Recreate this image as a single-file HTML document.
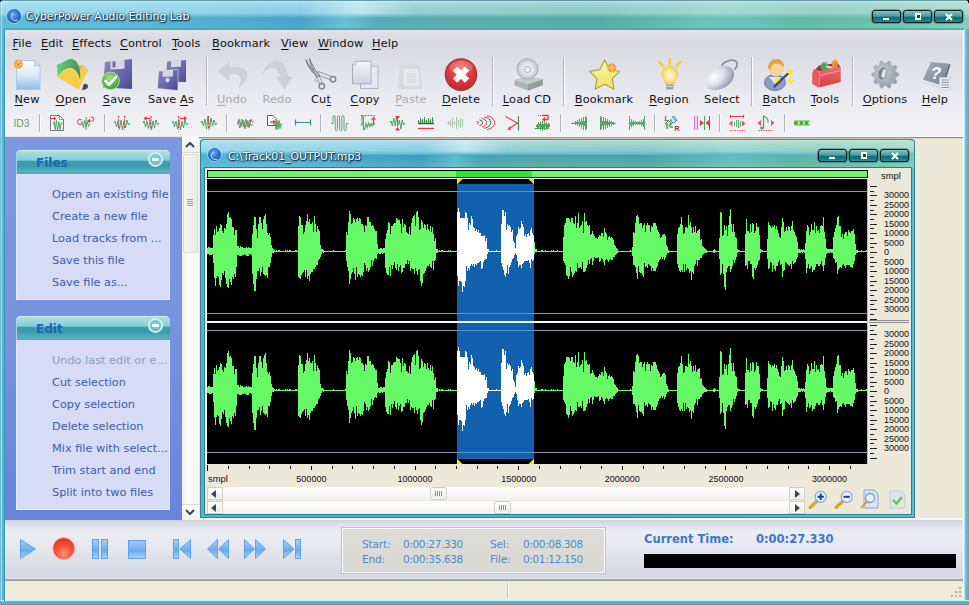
<!DOCTYPE html><html><head><meta charset="utf-8"><title>CyberPower Audio Editing Lab</title><style>
*{box-sizing:border-box}
html,body{margin:0;padding:0}
body{width:969px;height:605px;position:relative;overflow:hidden;background:#49b4cf;font-family:"DejaVu Sans","Liberation Sans",sans-serif;font-size:11.5px;color:#000}
.a{position:absolute}
.t{position:absolute;white-space:nowrap;line-height:1}
#frame{left:0;top:0;width:969px;height:605px;background:#4ab5d3}
.tup{position:absolute;-webkit-mask-image:linear-gradient(180deg,#000 0,#000 72%,transparent 100%);mask-image:linear-gradient(180deg,#000 0,#000 72%,transparent 100%);background:linear-gradient(180deg,rgba(255,255,255,.22) 0,rgba(255,255,255,0) 60%),linear-gradient(90deg,#98daec 0%,#94d6ea 20%,#8ccfe6 31%,#c0e6f0 37%,#94d0d4 43%,#8eccc8 62%,#a2d8d4 74.5%,#98d2c6 85%,#a8dccc 100%)}
.tlo{position:absolute;background:linear-gradient(180deg,rgba(0,0,0,.03) 0,rgba(255,255,255,.10) 100%),linear-gradient(90deg,#50b6d6 0%,#52b8d6 10%,#3f9ec6 31%,#5cbcd0 35.6%,#4aa6b6 39%,#4ea8a4 46.5%,#48a8a0 62%,#62c2ba 74.5%,#58b6a4 82.5%,#60bea6 91%,#78ccb8 100%)}
#client{left:5px;top:30px;width:958px;height:570px;background:#ece9d8}
#tb{left:5px;top:30px;width:958px;height:106px;background:linear-gradient(180deg,#e6e7ee 0,#dddee6 3px,#d7d9e1 14px,#dadce3 24px,#e3e4ea 45px,#eaebf0 70px,#f0f0f4 90px,#f2f2f6 106px)}
.menu span{position:absolute;top:36.5px;white-space:nowrap;line-height:14px;font-size:11.3px;letter-spacing:.12px;color:#111}
u{text-decoration:underline;text-underline-offset:1.5px;text-decoration-thickness:1px}
.lbl{position:absolute;top:93.3px;white-space:nowrap;line-height:14px;font-size:11.3px;letter-spacing:.15px;color:#111}
.dis{color:#a9a9a9}
.vsep{position:absolute;width:1px;background:#b4b4bc;box-shadow:1px 0 0 #fafafc}
#side{left:5px;top:137px;width:177px;height:383px;background:linear-gradient(180deg,#7d98e1 0,#7792df 50%,#6685da 100%)}
.ph{position:absolute;left:11px;width:154px;height:24px;border-radius:5px 5px 0 0;background:linear-gradient(180deg,#b4e0e6 0,#a2d8e0 4px,#86ccd6 10px,#3c9eb0 11.5px,#3a9cae 16px,#58b2c0 22px,#4ca8b8 24px);box-shadow:inset 0 1px 0 #d7f0f3, inset 1px 0 0 #9fd4dc}
.ph b{position:absolute;left:20px;top:5.5px;font-size:12px;color:#1f64b8;line-height:14px}
.pb{position:absolute;left:11px;width:154px;background:#d6dbf7;border:1px solid #e9ecfb;border-top:none}
.pb span{position:absolute;left:35px;white-space:nowrap;color:#3b5fa6;font-size:11.3px;line-height:14px}
.pb span.d{color:#8f9cc0}
.minus{position:absolute;right:7.3px;top:2.3px;width:14.6px;height:14.6px;border-radius:50%;border:2px solid #c9eef2;background:radial-gradient(circle at 50% 40%,#8ed0d8,#5fb5c2)}
.minus i{position:absolute;left:1.8px;top:4.2px;width:7px;height:2.4px;background:#eafcff;border-radius:1px}

.wb{position:absolute;height:13px;border:1px solid #031a1e;border-radius:3px;background:linear-gradient(180deg,#9ccccc 0,#74b4b6 1.5px,#4c9ea2 5px,#0f6e78 6.5px,#147a82 9px,#2a9298 11px);box-shadow:0 0 0 .6px rgba(20,60,70,.6)}
#cw{left:200px;top:139px;width:715px;height:379px;border-radius:4px 4px 0 0;background:linear-gradient(90deg,#4ab6d3 0,#4cb6d0 60%,#5cbacc 100%);box-shadow:inset 0 0 0 1px #2f8496}
.ttxt{position:absolute;white-space:nowrap;color:#fff;font-size:10.85px;line-height:14px;text-shadow:1px 1px 1px #14304f,0 0 2px #1a3a5a,0 1px 2px #1a3a5a}
.orb{position:absolute;border-radius:50%;background:radial-gradient(circle at 45% 40%,#6fb0f0 0,#2f74cc 45%,#15489a 100%);box-shadow:0 0 0 1px rgba(190,225,245,.6)}
.orb:after{content:"";position:absolute;left:25%;top:22%;width:50%;height:50%;border-radius:50%;border:1.6px solid rgba(225,240,255,.85);border-right-color:transparent;border-top-color:transparent;transform:rotate(10deg)}
.sc{position:absolute;white-space:nowrap;font-family:"Liberation Sans",sans-serif;font-size:9px;line-height:10px;color:#111}
.sbtn{position:absolute;background:linear-gradient(180deg,#fff,#ecebe4);border:1px solid #f8f8f4;box-shadow:0 0 0 1px #d2d0c4}
#bp{left:5px;top:520px;width:958px;height:61px;background:linear-gradient(180deg,#cfd2df 0,#dcdee8 4px,#ecedf3 12px,#e9eaf1 22px,#dfe1ea 38px,#d6d8e5 54px,#d9dbe6 59px,#85878d 60px,#a8a8a8 61px)}
#sb{left:5px;top:581px;width:958px;height:19px;background:#eeebda}
.inf{position:absolute;white-space:nowrap;font-size:10.5px;line-height:13px;color:#4b8ad0}
</style></head><body><div id="frame" class="a"></div><div class="tlo" style="left:0;top:0;width:969px;height:30px"></div><div class="tup" style="left:0;top:0;width:969px;height:18px"></div><div class="a" style="left:0;top:0;width:969px;height:1px;background:#5f9aa6"></div><div class="a" style="left:0;top:1px;width:969px;height:1px;background:rgba(255,255,255,.35)"></div><div class="a" style="left:0;top:29px;width:5px;height:576px;background:linear-gradient(90deg,#4aa4c4 0,#a4e0f0 1.2px,#86d4ea 2px,#4cb6d6 2.6px,#49b3d3 4.3px,#3f98ac 4.3px,#3f98ac 5px)"></div><div class="a" style="left:0;top:1px;width:3px;height:28px;background:linear-gradient(90deg,rgba(60,130,160,.55) 0,rgba(255,255,255,.5) 1.2px,rgba(255,255,255,.2) 2px,rgba(255,255,255,0) 3px)"></div><div class="a" style="left:963px;top:29px;width:6px;height:576px;background:linear-gradient(90deg,#fff 0,#fff 1.2px,#94dae6 1.6px,#5cc0d4 3px,#48b4cc 6px)"></div><div class="a" style="left:4px;top:28px;width:960px;height:2px;background:linear-gradient(180deg,rgba(50,150,150,.35),#48a4a6)"></div><div class="a" style="left:0;top:600px;width:969px;height:5px;background:linear-gradient(180deg,#d8f2f6 0,#c0ecf2 1px,#58bcd6 1.4px,#4ab2d0 3px,#3ea4c6 5px)"></div><div class="a" style="left:4px;top:600px;width:1px;height:1px;background:#378c9e"></div><div class="orb" style="left:7px;top:9px;width:14px;height:14px"></div><div class="ttxt" style="left:26px;top:10px">CyberPower Audio Editing Lab</div><div class="wb" style="left:872px;top:10px;width:29px"><i style="position:absolute;left:10px;top:7px;width:6px;height:2px;background:#fff"></i></div><div class="wb" style="left:903px;top:10px;width:29px"><i style="position:absolute;left:11px;top:2px;width:6px;height:7px;background:#fff"></i><i style="position:absolute;left:12.5px;top:4px;width:3px;height:2.5px;background:#0c4a52"></i></div><div class="wb" style="left:934px;top:10px;width:29px"><svg style="position:absolute;left:10px;top:2px" width="8" height="8" viewBox="0 0 8 8"><path d="M1 1L7 7M7 1L1 7" stroke="#fff" stroke-width="2"/></svg></div><div class="a" style="left:0;top:0;width:2px;height:1px;background:#1c3038"></div><div class="a" style="left:0;top:0;width:1px;height:2px;background:#1c3038"></div><div class="a" style="left:967px;top:0;width:2px;height:1px;background:#111"></div><div class="a" style="left:968px;top:0;width:1px;height:3px;background:#111"></div><div id="client" class="a"></div><div id="tb" class="a"></div><div class="menu"><span style="left:12.5px"><u>F</u>ile</span><span style="left:41px"><u>E</u>dit</span><span style="left:72px"><u>E</u>ffects</span><span style="left:120px"><u>C</u>ontrol</span><span style="left:172px"><u>T</u>ools</span><span style="left:212px"><u>B</u>ookmark</span><span style="left:281px"><u>V</u>iew</span><span style="left:318px"><u>W</u>indow</span><span style="left:372px"><u>H</u>elp</span></div><span class="lbl" style="left:-23px;width:100px;text-align:center"><u>N</u>ew</span><span class="lbl" style="left:21px;width:100px;text-align:center"><u>O</u>pen</span><span class="lbl" style="left:67px;width:100px;text-align:center"><u>S</u>ave</span><span class="lbl" style="left:121px;width:100px;text-align:center">Save <u>A</u>s</span><span class="lbl dis" style="left:182px;width:100px;text-align:center"><u>U</u>ndo</span><span class="lbl dis" style="left:227px;width:100px;text-align:center">Redo</span><span class="lbl" style="left:271px;width:100px;text-align:center">Cu<u>t</u></span><span class="lbl" style="left:315px;width:100px;text-align:center"><u>C</u>opy</span><span class="lbl dis" style="left:361px;width:100px;text-align:center"><u>P</u>aste</span><span class="lbl" style="left:411px;width:100px;text-align:center"><u>D</u>elete</span><span class="lbl" style="left:477px;width:100px;text-align:center"><u>L</u>oad CD</span><span class="lbl" style="left:554px;width:100px;text-align:center"><u>B</u>ookmark</span><span class="lbl" style="left:619px;width:100px;text-align:center"><u>R</u>egion</span><span class="lbl" style="left:672px;width:100px;text-align:center">Select</span><span class="lbl" style="left:729px;width:100px;text-align:center"><u>B</u>atch</span><span class="lbl" style="left:775px;width:100px;text-align:center"><u>T</u>ools</span><span class="lbl" style="left:835px;width:100px;text-align:center"><u>O</u>ptions</span><span class="lbl" style="left:885px;width:100px;text-align:center"><u>H</u>elp</span><div class="vsep" style="left:206px;top:57px;height:49px"></div><div class="vsep" style="left:492px;top:57px;height:49px"></div><div class="vsep" style="left:563px;top:57px;height:49px"></div><div class="vsep" style="left:751px;top:57px;height:49px"></div><div class="vsep" style="left:852px;top:57px;height:49px"></div><div class="vsep" style="left:39px;top:114px;height:18px"></div><div class="vsep" style="left:104px;top:114px;height:18px"></div><div class="vsep" style="left:226px;top:114px;height:18px"></div><div class="vsep" style="left:320px;top:114px;height:18px"></div><div class="vsep" style="left:560px;top:114px;height:18px"></div><div class="vsep" style="left:654px;top:114px;height:18px"></div><div class="vsep" style="left:719px;top:114px;height:18px"></div><div class="vsep" style="left:784px;top:114px;height:18px"></div><svg class="a" style="left:0;top:55px" width="969" height="40" viewBox="0 55 969 40"><defs>
<linearGradient id="gnew" x1="0" y1="0" x2="0" y2="1"><stop offset="0" stop-color="#fbfdff"/><stop offset=".5" stop-color="#dcecfa"/><stop offset="1" stop-color="#8cbdec"/></linearGradient>
<linearGradient id="gfl" x1="0" y1="0" x2="1" y2="1"><stop offset="0" stop-color="#8a8ac4"/><stop offset=".5" stop-color="#6a6ab0"/><stop offset="1" stop-color="#4c4c94"/></linearGradient>
<radialGradient id="ggr" cx=".45" cy=".35" r=".7"><stop offset="0" stop-color="#a8e090"/><stop offset=".6" stop-color="#5cb848"/><stop offset="1" stop-color="#3c9030"/></radialGradient>
<radialGradient id="gred" cx=".5" cy=".3" r=".8"><stop offset="0" stop-color="#f07070"/><stop offset=".5" stop-color="#e03838"/><stop offset="1" stop-color="#b82020"/></radialGradient>
<linearGradient id="gcp" x1="0" y1="0" x2="0" y2="1"><stop offset="0" stop-color="#f4f4fa"/><stop offset="1" stop-color="#cfd2e2"/></linearGradient>
<radialGradient id="gcd" cx=".5" cy=".5" r=".5"><stop offset="0" stop-color="#f8f8fa"/><stop offset=".6" stop-color="#dfe3e8"/><stop offset="1" stop-color="#b8c0c8"/></radialGradient>
<linearGradient id="gstar" x1="0" y1="0" x2="0" y2="1"><stop offset="0" stop-color="#fbf6a8"/><stop offset="1" stop-color="#f0e060"/></linearGradient>
<radialGradient id="gbulb" cx=".5" cy=".5" r=".5"><stop offset="0" stop-color="#fff8f0"/><stop offset=".55" stop-color="#fbe898"/><stop offset="1" stop-color="#f2cc48"/></radialGradient>
<radialGradient id="gmouse" cx=".35" cy=".3" r=".8"><stop offset="0" stop-color="#ffffff"/><stop offset=".45" stop-color="#dcdeea"/><stop offset=".8" stop-color="#a4a9c6"/><stop offset="1" stop-color="#8088ac"/></radialGradient>
<linearGradient id="gtool" x1="0" y1="0" x2="0" y2="1"><stop offset="0" stop-color="#f07078"/><stop offset="1" stop-color="#d83840"/></linearGradient>
<radialGradient id="ggear" cx=".4" cy=".4" r=".7"><stop offset="0" stop-color="#c4ccd6"/><stop offset="1" stop-color="#8c96a4"/></radialGradient>
<linearGradient id="gbook" x1="0" y1="0" x2="1" y2="1"><stop offset="0" stop-color="#a4b0c0"/><stop offset="1" stop-color="#74808e"/></linearGradient>
<linearGradient id="gleaf" x1="0" y1="0" x2="1" y2="0"><stop offset="0" stop-color="#5cd674"/><stop offset=".4" stop-color="#58b868"/><stop offset="1" stop-color="#4c8c5c"/></linearGradient>
</defs><path d="M16.5 60.5h18l5.5 5.5v23.5h-23.5z" fill="url(#gnew)" stroke="#a8c8ea" stroke-width="1"/><path d="M34.5 60.5v5.5h5.5z" fill="#c8dcf2" stroke="#a8c8ea" stroke-width=".8"/><circle cx="18.4" cy="64.3" r="4.6" fill="#f8a838"/><path d="M18.4 61v6.6M15.1 64.3h6.6" stroke="#fbd890" stroke-width="1.2"/><circle cx="18.4" cy="64.3" r="1.4" fill="#f08818"/><path d="M83.500 84.500c2-1.500 4.500-.5 4.500 2 0 2-3 3.500-6 3.500z" fill="#4a4a48"/><path d="M58.600 63.600l6 .6 3 1.400 15.400-.6 5 5.200-9.500 19.200-20.900-12.600z" fill="#eebc34"/><path d="M82 66l6 4.200-9.500 19.200-2-9z" fill="#f6d050"/><path d="M57 64.500c5-.5 10-6 15-5.500 6 1 9.500 11 8 22-1.500-8-5-13-10-13-5 0-9 5-12.400 9z" fill="url(#gleaf)"/><path d="M57.600 77c4-4.500 8-8.500 12.400-8.500 5 0 8.500 6 10 14l-1.500 7z" fill="#f6cf48"/><path d="M57.600 77c4-4.500 8-8.500 12.400-8.500 5 0 8.500 6 10 14" stroke="#fae48c" stroke-width=".8" fill="none"/><path d="M105 62l27-3v30l-29-1.500z" fill="url(#gfl)"/><path d="M110.500 60.500l14-1.200v9.500l-14 .8z" fill="#d4d6e2"/><path d="M112.500 61.500l3-.3v6l-3 .2z" fill="#6a6aa8"/><circle cx="110.500" cy="80.800" r="8.800" fill="url(#ggr)" stroke="#b8e0a8" stroke-width="1"/><path d="M105.500 81l3.500 3.800 7-8" stroke="#fff" stroke-width="2.600" fill="none" stroke-linecap="round" stroke-linejoin="round"/><path d="M167 61.500l19-1.500v22l-20-.5z" fill="url(#gfl)"/><path d="M171 60.800l10-.6v6.500l-10 .5z" fill="#d4d6e2"/><path d="M158.500 71l19.500-1.500v21l-20.500-2z" fill="url(#gfl)" stroke="#e8e8f2" stroke-width=".6"/><path d="M162.500 70.500l10.500-.8v6.800l-10.500 .6z" fill="#d4d6e2"/><circle cx="167.500" cy="80" r="2.200" fill="#d8dcec"/><path d="M218 71l11.500-9.500v5.500c9-.5 17 .5 18 6.500 .5 6-5 11-10.500 16 3-5 5-10 3-13-2-2.500-6-2.500-10.500-2v6.500z" fill="#cdd0d6"/><path d="M261 76c3-8 9-15 16-15.500 7 1 10 8 11 16h4.500l-8 13.500-8.500-13h4.500c-1-5-3-9-7-9.500-5 0-9 4-12.500 8.500z" fill="#cdd0d6"/><path d="M319 73.500l11.500 4.500" stroke="#8c8c90" stroke-width="4.200" stroke-linecap="round"/><path d="M319 73.500l11.500 4.500" stroke="#e6e6ea" stroke-width="2.600" stroke-linecap="round"/><path d="M317.500 76l3.500 7.500" stroke="#8c8c90" stroke-width="3.800" stroke-linecap="round"/><path d="M317.500 76l3.500 7.500" stroke="#e6e6ea" stroke-width="2.200" stroke-linecap="round"/><path d="M306 59.500c2.500 6.500 7 11.500 13.500 15.500l-2 1.500c-6-4.500-10-10-11.500-17z" fill="#bcbcc0" stroke="#707074" stroke-width=".9"/><path d="M309.500 58.500c1 7 3.500 12.500 8 18.500l2.200-1.500c-4.500-5-7.500-10.500-10.200-17z" fill="#c8c8cc" stroke="#707074" stroke-width=".9"/><circle cx="333" cy="79.300" r="2.700" fill="#e4e4e8" stroke="#88888c" stroke-width="1.500"/><circle cx="321.800" cy="86.300" r="2.700" fill="#e4e4e8" stroke="#88888c" stroke-width="1.500"/><circle cx="316.500" cy="80" r="1.600" fill="#ececee" stroke="#a4a4a8" stroke-width=".9"/><path d="M360.500 66h17.500v22.500h-17.500z" fill="#e6e8f2" stroke="#b0b4c6"/><path d="M356 61.200h15v22.600h-18.500v-19z" fill="url(#gcp)" stroke="#a8acc0"/><path d="M352.500 64.800h3.500v-3.600z" fill="#fff" stroke="#a8acc0" stroke-width=".7"/><path d="M400 65h20l2.500 24h-25z" fill="#d9dade"/><path d="M406 59.500h9v6h-9z" fill="#dcdde1"/><path d="M404 69h14l1.500 17h-16z" fill="#e8e9ec"/><path d="M407 73h9v10h-9z" fill="#dfe0e4"/><circle cx="461" cy="74.600" r="15.600" fill="url(#gred)" stroke="#a83440" stroke-width="1.400"/><ellipse cx="461" cy="67.500" rx="11.500" ry="6.500" fill="#fff" opacity=".16"/><path d="M455 68.600l12 12M467 68.600l-12 12" stroke="#fff" stroke-width="6" stroke-linecap="butt"/><path d="M514.500 80l14-3.500 14.500 3v5.500l-15 5.500-13.500-5z" fill="#a8b4b0"/><path d="M514.500 80l14-3.500 14.500 3-15 5z" fill="#c4ccc8"/><path d="M528 84.500l15-5v5.500l-15 5.500z" fill="#90a098"/><ellipse cx="527.500" cy="69" rx="10.500" ry="10.300" fill="url(#gcd)" stroke="#a8b0b8" stroke-width="1"/><circle cx="527.500" cy="69.500" r="3" fill="#f4f6f8" stroke="#a0a8b0" stroke-width="1"/><circle cx="527.500" cy="69.500" r="1.200" fill="#e8ecf0"/><path d="M604.600 60l4.800 9.600 10.400 1.700-7.600 7.300 1.900 10.600-9.500-5-9.500 5 1.900-10.600-7.600-7.300 10.400-1.700z" fill="url(#gstar)" stroke="#a8a458" stroke-width="1.200" stroke-linejoin="round"/><circle cx="611.800" cy="67.900" r="4.400" fill="#f89838"/><path d="M611.800 64.500v6.800M608.400 67.900h6.800" stroke="#fbd088" stroke-width="1.100"/><path d="M659 62l4 4M669.800 59v5M680.500 62l-4 4" stroke="#f4cc50" stroke-width="2.600" stroke-linecap="round"/><path d="M669.800 66c5 0 8.500 3.800 8.500 8.200 0 4-3 6-4 10h-9c-1-4-4-6-4-10 0-4.400 3.500-8.200 8.500-8.200z" fill="url(#gbulb)"/><rect x="666" y="84.500" width="7.500" height="5" fill="#9aa0a8"/><rect x="666" y="86" width="7.500" height="1" fill="#d0d4d8"/><path d="M722 65c2-3.500 8-5.500 12.500-4.500 3.500 1 3.500 5.500 .5 8.500" stroke="#8c92a6" stroke-width="1.800" fill="none" stroke-linecap="round"/><ellipse cx="719.800" cy="78.200" rx="15.500" ry="10.500" transform="rotate(-32 719.800 78.200)" fill="url(#gmouse)"/><ellipse cx="775" cy="82.500" rx="10.500" ry="8" fill="#8c9cc4" stroke="#6878a8" stroke-width="1"/><path d="M769 77l6 7 6-7z" fill="#e8ecf6"/><circle cx="776" cy="68.500" r="7.800" fill="#f4d498"/><path d="M768 68c0-6 4-9.500 9-9 5 .5 7.500 4 7 8-3-3-7-4-10-3-2 1-3 3-3 6z" fill="#dca848"/><path d="M774.500 86.500l13.500-13" stroke="#404858" stroke-width="2.400" stroke-linecap="round"/><path d="M790 67.4l1.38 3.2199999999999998 3.2199999999999998 1.38-3.2199999999999998 1.38-1.38 3.2199999999999998-1.38-3.2199999999999998-3.2199999999999998-1.38 3.2199999999999998-1.38z" fill="#f4e830"/><path d="M790.6 76.39999999999999l1.32 3.08 3.08 1.32-3.08 1.32-1.32 3.08-1.32-3.08-3.08-1.32 3.08-1.32z" fill="#f4e830"/><path d="M777 76.4l1.08 2.52 2.52 1.08-2.52 1.08-1.08 2.52-1.08-2.52-2.52-1.08 2.52-1.08z" fill="#f4e830"/><path d="M815 70l4-4.500 18.500-2.500 3 4-20 4.500z" fill="#a83038"/><path d="M821 70c-1-4 0-7.500 3-8 3-.5 4 1.500 3.500 3.500l3 3.500-4 2.500z" fill="#48a858"/><path d="M823.500 63.500c1.500-1 3-.5 3.500 1" stroke="#90d898" stroke-width="1" fill="none"/><path d="M826.500 66.500l7 1.500" stroke="#ece4cc" stroke-width="2.200"/><path d="M832.500 71c-1-4-1-9 1-11 2-1.500 4.500 0 4.500 3l-1 8z" fill="#e89030"/><path d="M834 61.500c.8-1 2-1 2.600 0" stroke="#f8c880" stroke-width="1" fill="none"/><path d="M812.500 73.500c0-2.500 1-4 2.500-4.500l4 2.500 21.700-5v15.500l-21.700 5.500-6.500-3.500z" fill="url(#gtool)"/><path d="M819 71.500v16" stroke="#f8a8ac" stroke-width="1"/><path d="M812.500 74c0-2 1-3.500 2.500-4.500l4 2.500v15.500l-6.500-3.500z" fill="#e85860"/><path d="M819.500 75.500l21-5" stroke="#f4989c" stroke-width="1.200" fill="none"/><path d="M898.8 73.5L898.8 75.7L895.7 77.2L895.2 78.8L896.9 81.9L895.6 83.7L892.2 83.0L890.9 84.0L890.5 87.5L888.5 88.2L886.2 85.6L884.5 85.6L882.1 88.2L880.1 87.5L879.7 84.0L878.4 83.0L875.0 83.7L873.7 81.9L875.4 78.8L874.9 77.2L871.8 75.7L871.8 73.5L874.9 72.0L875.4 70.4L873.7 67.3L875.0 65.5L878.4 66.2L879.7 65.2L880.1 61.7L882.1 61.0L884.4 63.6L886.1 63.6L888.5 61.0L890.5 61.7L890.9 65.2L892.2 66.2L895.6 65.5L896.9 67.3L895.2 70.4L895.7 72.0z" fill="url(#ggear)" stroke="#a4acb8" stroke-width=".8" stroke-linejoin="round"/><ellipse cx="882.500" cy="73.500" rx="4.200" ry="6" transform="rotate(15 882.500 73.500)" fill="#7c8694"/><ellipse cx="883.800" cy="73.500" rx="2" ry="4.500" transform="rotate(15 883.800 73.500)" fill="#dfe3ea"/><path d="M931 62l18 1.800-7.500 24.200-19.500-6.200z" fill="url(#gbook)"/><path d="M922 81.800l19.500 6.200.8-2.500-19.500-6z" fill="#e4e8ee"/><path d="M949 63.800l1.500 1-7.500 23.500-1.500-.3z" fill="#5c6876"/><text x="929.500" y="79.500" font-family="Liberation Sans, sans-serif" font-weight="bold" font-size="17" fill="#fff" transform="skewX(-12)" style="transform-origin:929px 79px">?</text><path d="M939.500 77.500h11v12.500h-11z" fill="#e8ebf0" stroke="#c4cad2" stroke-width=".6"/><path d="M941.500 80h7.500M941.500 82.500h7.500M941.500 85h7.500M941.500 87.500h7.500" stroke="#8c96a4" stroke-width="1"/></svg><svg class="a" style="left:0;top:111px" width="969" height="25" viewBox="0 111 969 25"><text x="13.500" y="127" font-family="Liberation Sans, sans-serif" font-size="10.500" fill="#5aa078" textLength="16" lengthAdjust="spacingAndGlyphs">ID3</text><path d="M50.500 115.500h9l4 4v11h-13z" fill="#fdfdfd" stroke="#707880" stroke-width="1"/><path d="M59.500 115.500v4h4" fill="none" stroke="#707880" stroke-width=".8"/><path d="M53 124.5L54.0 121.5L55.2 129.5L56.4 120.5L57.6 130.5L58.8 121.5L60.0 129.5L61.2 122.5L62.4 124.5" stroke="#4aa860" stroke-width="1.0" fill="none" stroke-linejoin="round"/><path d="M50 118.500h5" stroke="#e83848" stroke-width="1.300"/><path d="M54 116.500l2.500 2-2.500 2z" fill="#e83848"/><path d="M86 117v13" stroke="#4aa860" stroke-width="1"/><path d="M81 123.5L82.0 121.5L83.3 127.5L84.6 120.5L85.9 127.5L87.2 121.5L88.5 126.5L89.8 123.5" stroke="#4aa860" stroke-width="1.0" fill="none" stroke-linejoin="round"/><path d="M81.500 120a2.500 2.500 0 1 0 0 4" stroke="#e8506a" stroke-width="1.100" fill="none"/><path d="M88 121h4a2 2 0 1 0-1.500-3.500" stroke="#e8506a" stroke-width="1.200" fill="none"/><path d="M87 121l3-2.200v4.400z" fill="#e83848"/><path d="M114 123L115.0 121.0L116.5 127.0L118.0 121.0L119.5 129.0L121.0 120.0L122.5 130.0L124.0 121.0L125.5 128.0L127.0 120.0L128.5 125.0L130.0 123" stroke="#4aa860" stroke-width="1.0" fill="none" stroke-linejoin="round"/><path d="M118.5 116V130" stroke="#e83848" stroke-width="1.2" stroke-dasharray="2 1.3" fill="none"/><path d="M124.5 116V130" stroke="#e83848" stroke-width="1.2" stroke-dasharray="2 1.3" fill="none"/><path d="M143 123L144.0 121.0L145.5 127.0L147.0 121.0L148.5 129.0L150.0 120.0L151.5 130.0L153.0 121.0L154.5 128.0L156.0 120.0L157.5 125.0L159.0 123" stroke="#4aa860" stroke-width="1.0" fill="none" stroke-linejoin="round"/><path d="M151 116V130" stroke="#e83848" stroke-width="1.2" stroke-dasharray="2 1.3" fill="none"/><path d="M144.500 118.500h6" stroke="#e83848" stroke-width="1.400"/><path d="M143.500 118.500l3-2.500v5z" fill="#e83848"/><path d="M172 123L173.0 121.0L174.5 127.0L176.0 121.0L177.5 129.0L179.0 120.0L180.5 130.0L182.0 121.0L183.5 128.0L185.0 120.0L186.5 125.0L188.0 123" stroke="#4aa860" stroke-width="1.0" fill="none" stroke-linejoin="round"/><path d="M178.5 116V130" stroke="#e83848" stroke-width="1.2" stroke-dasharray="2 1.3" fill="none"/><path d="M179.500 118.500h5" stroke="#e83848" stroke-width="1.400"/><path d="M187 118.500l-3-2.500v5z" fill="#e83848"/><path d="M201 123L202.0 121.0L203.5 126.0L205.0 119.0L206.5 129.0L208.0 116.0L209.5 129.0L211.0 118.0L212.5 126.0L214.0 120.0L215.5 125.0L217.0 123" stroke="#4aa860" stroke-width="1.0" fill="none" stroke-linejoin="round"/><path d="M208.5 116V130" stroke="#e83848" stroke-width="1.2" stroke-dasharray="2 1.3" fill="none"/><path d="M238 122.5L239.0 119.5L241.0 126.5L243.0 120.5L245.0 128.5L247.0 120.5L249.0 127.5L251.0 119.5L253.0 122.5" stroke="#e05868" stroke-width="1.2" fill="none" stroke-linejoin="round"/><path d="M237 124L238.0 122.0L239.9 128.0L241.8 119.0L243.7 127.0L245.6 119.0L247.5 127.0L249.4 120.0L251.3 126.0L253.2 124" stroke="#4aa860" stroke-width="1.0" fill="none" stroke-linejoin="round"/><path d="M267.500 115.500h5.500l3 3v7h-8.500z" fill="#fff" stroke="#a03840" stroke-width="1"/><path d="M270 122h4" stroke="#e83848" stroke-width="1.300"/><path d="M276 122l-3-2.300v4.600z" fill="#e83848"/><path d="M274 125.5L275.0 123.5L276.0 129.5L277.0 120.5L278.0 129.5L279.0 120.5L280.0 128.5L281.0 123.5L282.0 125.5" stroke="#4aa860" stroke-width="1.0" fill="none" stroke-linejoin="round"/><path d="M295.500 119.500v6M310.500 119.500v6M295.500 122.500h15" stroke="#3a9088" stroke-width="1.200" fill="none"/><path d="M331 123.500h2v-6.500c0-1.800 2.200-1.800 2.200 0v12.500c0 1.800 2.200 1.800 2.200 0v-12.500c0-1.800 2.200-1.800 2.200 0v12.500c0 1.800 2.200 1.800 2.200 0v-12.500c0-1.800 2.200-1.800 2.200 0v12.500c0 1.800 2.200 1.800 2.200 0v-6h2.300" stroke="#5aa872" stroke-width="1" fill="none"/><path d="M361 115.500h14" stroke="#e83848" stroke-width="1.200" stroke-dasharray="2 1.200"/><path d="M360.500 125h1.500v-8.500h1.500v13h1.200l1.300-6 1.300 4 1.300-4.500 1.200 3.500 1.300-3 1.200 2.500 1.200-2.500 1.500 1" stroke="#4aa860" stroke-width="1.100" fill="none"/><path d="M373.500 119.500v5" stroke="#e83848" stroke-width="1.400"/><path d="M373.500 116.500l2.500 3.200h-5z" fill="#e83848"/><path d="M390 123L391.0 121.0L392.4 126.0L393.8 118.0L395.2 126.0L396.6 117.0L398.0 125.0L399.4 120.0L400.8 129.0L402.2 120.0L403.6 125.0L405.0 123" stroke="#4aa860" stroke-width="1.0" fill="none" stroke-linejoin="round"/><path d="M395 116h5l-2.500 3.500zM395 130.500h5l-2.500-3.500z" fill="#e83848"/><path d="M397.500 119v8" stroke="#e83848" stroke-width="1"/><path d="M418 123.500h16" stroke="#2f6038" stroke-width="1.400"/><g shape-rendering="crispEdges"><path d="M418.5 123V120" stroke="#4a9458" stroke-width="1"/><path d="M420.5 123V118" stroke="#4a9458" stroke-width="1"/><path d="M422.5 123V119" stroke="#4a9458" stroke-width="1"/><path d="M424.5 123V117" stroke="#4a9458" stroke-width="1"/><path d="M426.5 123V120" stroke="#4a9458" stroke-width="1"/><path d="M428.5 123V118" stroke="#4a9458" stroke-width="1"/><path d="M430.5 123V119" stroke="#4a9458" stroke-width="1"/><path d="M432.5 123V117" stroke="#4a9458" stroke-width="1"/><path d="M419.5 123V121" stroke="#9cc8a4" stroke-width="1"/><path d="M421.5 123V120" stroke="#9cc8a4" stroke-width="1"/><path d="M423.5 123V121" stroke="#9cc8a4" stroke-width="1"/><path d="M425.5 123V120" stroke="#9cc8a4" stroke-width="1"/><path d="M427.5 123V121" stroke="#9cc8a4" stroke-width="1"/><path d="M429.5 123V120" stroke="#9cc8a4" stroke-width="1"/><path d="M431.5 123V121" stroke="#9cc8a4" stroke-width="1"/><path d="M433.5 123V120" stroke="#9cc8a4" stroke-width="1"/></g><path d="M418 128.500h16" stroke="#e83848" stroke-width="1.300"/><g shape-rendering="crispEdges"><path d="M448.0 121V125M450.0 120V126M452.0 118V128M454.0 121V125M456.0 117V129M458.0 120V126M460.0 118V128M462.0 119V127" stroke="#a8c6a8" stroke-width="1" fill="none" shape-rendering="crispEdges"/></g><path d="M446 123h17" stroke="#b4ccb4" stroke-width=".6"/><path d="M477.0 121.3a2 1.44 0 0 1 0 2.8" stroke="#e83848" stroke-width="1" fill="none" transform="translate(0.0 0)"/><path d="M477.6 119.9a4 2.88 0 0 1 0 5.6" stroke="#3a7048" stroke-width="1" fill="none" transform="translate(1.9 0)"/><path d="M478.2 118.5a6 4.32 0 0 1 0 8.399999999999999" stroke="#e83848" stroke-width="1" fill="none" transform="translate(3.8 0)"/><path d="M478.8 117.10000000000001a8 5.76 0 0 1 0 11.2" stroke="#3a7048" stroke-width="1" fill="none" transform="translate(5.699999999999999 0)"/><path d="M479.4 115.7a10 7.199999999999999 0 0 1 0 14.0" stroke="#e83848" stroke-width="1" fill="none" transform="translate(7.6 0)"/><path d="M505.500 116.500l12 6.500-8.500 5.500" stroke="#e83848" stroke-width="1.100" fill="none"/><path d="M507.500 130l4-.5-2-3.200z" fill="#e83848"/><path d="M518.500 116v14.500" stroke="#3a8858" stroke-width="1.100"/><path d="M536.0 124.5V126.5M537.0 123.5V127.5M538.0 122.0V129.0M539.0 124.0V127.0M540.0 121.5V129.5M541.0 123.5V127.5M542.0 120.5V130.5M543.0 123.5V127.5M544.0 121.5V129.5M545.0 124.0V127.0M546.0 121.5V129.5M547.0 123.5V127.5M548.0 122.5V128.5M549.0 124.0V127.0" stroke="#4aa860" stroke-width="1" fill="none" shape-rendering="crispEdges"/><path d="M534.500 128.500h14" stroke="#4aa860" stroke-width="1"/><path d="M538 115.500h4" stroke="#e83848" stroke-width="1" stroke-dasharray="1 1"/><path d="M542 115.500h6v4h-4" stroke="#e83848" stroke-width="1.300" fill="none"/><path d="M542 119.500l3-2.500v5z" fill="#e83848"/><path d="M571.0 122.5V123.5M572.0 122.5V123.5M573.0 122V124M574.0 122.5V123.5M575.0 121V125M576.0 122.2V123.8M577.0 120V126M578.0 122V124M579.0 119V127M580.0 121.5V124.5M581.0 117.5V128.5M582.0 121V125M583.0 116.5V129.5M584.0 120.5V125.5M585.0 116V130M586.0 117V129" stroke="#52a868" stroke-width="1" fill="none" shape-rendering="crispEdges"/><path d="M600.0 116V130M601.0 117V129M602.0 120.5V125.5M603.0 116.5V129.5M604.0 121V125M605.0 117.5V128.5M606.0 121V125M607.0 118.5V127.5M608.0 121.5V124.5M609.0 119.5V126.5M610.0 122V124M611.0 120.5V125.5M612.0 122.2V123.8M613.0 121.5V124.5M614.0 122.5V123.5M615.0 122.5V123.5" stroke="#52a868" stroke-width="1" fill="none" shape-rendering="crispEdges"/><path d="M629.0 116V130M630.0 121.5V124.5M631.0 119V127M632.0 121.5V124.5M633.0 120V126M634.0 122V124M635.0 121V125M636.0 122.2V123.8M637.0 121.5V124.5M638.0 122.2V123.8M639.0 121V125M640.0 122V124M641.0 120V126M642.0 121.5V124.5M643.0 119V127M644.0 116V130" stroke="#52a868" stroke-width="1" fill="none" shape-rendering="crispEdges"/><text x="664.500" y="120.500" font-family="Liberation Sans, sans-serif" font-size="7" font-weight="bold" fill="#3a8048">L</text><text x="674.500" y="131" font-family="Liberation Sans, sans-serif" font-size="7" font-weight="bold" fill="#a03048">R</text><path d="M667 129v-5l-2 0 3.500-3.500 3.500 3.500h-2v3h3" stroke="#2f7a3a" stroke-width=".9" fill="#b8e4bc"/><path d="M672 117h3v3h2l-3.500 3.500-3.500-3.500h2" stroke="#2a70b8" stroke-width=".9" fill="#c4e2f8"/><path d="M694.500 116v14M697.500 116v14" stroke="#e870cc" stroke-width="1"/><path d="M696 116v14" stroke="#f4b0e4" stroke-width="1"/><path d="M700 120l4 3-4 3z" fill="#e83848"/><path d="M704.500 116v14" stroke="#4aa860" stroke-width="1"/><path d="M709 120l-3.500 3 3.500 3z" fill="#e83848"/><path d="M709.500 116v14" stroke="#e83848" stroke-width="1"/><path d="M730.500 115v3M743.500 115v3M730.500 116.500h13" stroke="#e83848" stroke-width="1.100" fill="none"/><path d="M734.0 121.5V125.5M736.0 120.0V127.0M738.0 119.5V127.5M740.0 120.5V126.5M742.0 121.5V125.5" stroke="#5ab070" stroke-width="1" fill="none" shape-rendering="crispEdges"/><path d="M729 123.500l3.500-3v6zM745.500 123.500l-3.500-3v6z" fill="#e05868"/><path d="M730 130.500h15" stroke="#e83848" stroke-width="1.200" stroke-dasharray="1.200 1.200"/><path d="M763.500 128v-12c3 1 5 3 4.500 6.500" stroke="#4aa860" stroke-width="1.300" fill="none"/><ellipse cx="762" cy="128" rx="2" ry="1.600" fill="#4aa860"/><path d="M757.500 123l3.500-3v6zM774.500 123l-3.500-3v6z" fill="#e05868"/><path d="M758.500 130.500h15" stroke="#e83848" stroke-width="1.200" stroke-dasharray="1.200 1.200"/><rect x="794" y="120.500" width="16" height="5" fill="#5cc050"/><rect x="795" y="121.500" width="1.500" height="3" fill="#2a9a48"/><rect x="798" y="121.500" width="1.500" height="3" fill="#e8f070"/><rect x="800.5" y="121.500" width="1.500" height="3" fill="#2a9a48"/><rect x="803" y="121.500" width="1.500" height="3" fill="#e8f070"/><rect x="806" y="121.500" width="1.500" height="3" fill="#2a9a48"/><rect x="808.5" y="121.500" width="1.500" height="3" fill="#f0f8a0"/></svg><div id="side" class="a"><div class="ph" style="top:13px"><b>Files</b><div class="minus"><i></i></div></div><div class="pb" style="top:37px;height:126px"><span class="" style="top:13.7px">Open an existing file</span><span class="" style="top:35.8px">Create a new file</span><span class="" style="top:57.8px">Load tracks from ...</span><span class="" style="top:79.9px">Save this file</span><span class="" style="top:101.9px">Save file as...</span></div><div class="ph" style="top:179px"><b>Edit</b><div class="minus"><i></i></div></div><div class="pb" style="top:203px;height:170px"><span class="d" style="top:13.7px">Undo last edit or e...</span><span class="" style="top:35.8px">Cut selection</span><span class="" style="top:57.8px">Copy selection</span><span class="" style="top:79.9px">Delete selection</span><span class="" style="top:101.9px">Mix file with select...</span><span class="" style="top:124.0px">Trim start and end</span><span class="" style="top:146.0px">Split into two files</span></div></div><div class="a" style="left:182px;top:136px;width:781px;height:1px;background:#fbfbfd"></div><div class="a" style="left:199px;top:137px;width:764px;height:1px;background:#8e8e90"></div><div class="a" style="left:199px;top:138px;width:764px;height:1px;background:#d9d6c6"></div><div class="a" style="left:182px;top:137px;width:17px;height:383px;background:linear-gradient(90deg,#f2f1ea,#fdfdfb 40%,#f6f5f0)"></div><div class="a" style="left:182px;top:137px;width:17px;height:16px;background:linear-gradient(180deg,#fff,#f0efe8);box-shadow:inset 0 -1px 0 #dddacb"></div><div class="a" style="left:182px;top:504px;width:17px;height:16px;background:linear-gradient(180deg,#fff,#f0efe8);box-shadow:inset 0 1px 0 #dddacb"></div><svg class="a" style="left:185px;top:141px" width="10" height="7"><path d="M1 6L5 2L9 6" stroke="#3a4656" stroke-width="2" fill="none"/></svg><svg class="a" style="left:185px;top:509px" width="10" height="7"><path d="M1 1L5 5L9 1" stroke="#3a4656" stroke-width="2" fill="none"/></svg><div class="a" style="left:183px;top:154px;width:15px;height:99px;background:linear-gradient(90deg,#f6f6f2,#ecebe6);border:1px solid #dcdad0;border-radius:2px"></div><div class="a" style="left:187px;top:199px;width:6px;height:7px;background:repeating-linear-gradient(180deg,#9aa0a8 0,#9aa0a8 1px,transparent 1px,transparent 2px)"></div><div class="a" id="cw"></div><div class="tup" style="left:201px;top:140px;width:713px;height:15px;border-radius:3px 3px 0 0"></div><div class="tlo" style="left:201px;top:155px;width:713px;height:13px"></div><div class="a" style="left:206px;top:140px;width:703px;height:1px;background:rgba(255,255,255,.4)"></div><div class="orb" style="left:208px;top:148px;width:13px;height:13px"></div><div class="ttxt" style="left:228px;top:149.7px">C:\Track01_OUTPUT.mp3</div><div class="wb" style="left:818px;top:149px;width:29px"><i style="position:absolute;left:10px;top:7px;width:6px;height:2px;background:#fff"></i></div><div class="wb" style="left:849px;top:149px;width:29px"><i style="position:absolute;left:11px;top:2px;width:6px;height:7px;background:#fff"></i><i style="position:absolute;left:12.5px;top:4px;width:3px;height:2.5px;background:#0c4a52"></i></div><div class="wb" style="left:880px;top:149px;width:29px"><svg style="position:absolute;left:10px;top:2px" width="8" height="8" viewBox="0 0 8 8"><path d="M1 1L7 7M7 1L1 7" stroke="#fff" stroke-width="2"/></svg></div><div class="a" style="left:205px;top:168px;width:706px;height:346px;background:#ece9d8;box-shadow:0 0 0 1px #2f7c8c"></div><svg class="a" style="left:0;top:0" width="969" height="605" viewBox="0 0 969 605" shape-rendering="crispEdges"><rect x="206" y="169" width="663" height="295" fill="#fff"/><rect x="207" y="170" width="662" height="8" fill="#000"/><rect x="208" y="171" width="659" height="6" fill="#6af86a"/><rect x="456" y="171" width="76" height="6" fill="#2ee62e"/><rect x="207" y="179" width="661" height="285" fill="#000"/><rect x="457" y="184" width="77" height="275" fill="#1261ae"/><rect x="207" y="191" width="661" height="1" fill="#8c98ac"/><rect x="207" y="313" width="661" height="1" fill="#8c98ac"/><rect x="457" y="191" width="77" height="1" fill="#5c94d4"/><rect x="457" y="313" width="77" height="1" fill="#5c94d4"/><path d="M207 251V247.7h1V246.5h1V246.8h1V247.8h1V247.8h1V247.7h1V235.2h1V229.2h1V235.1h1V226.1h1V231.6h1V230.6h1V227.7h1V224.1h1V225.4h1V230.8h1V233.4h1V227.8h1V228.8h1V223.7h1V213.6h1V212.2h1V217.9h1V216.9h1V218.6h1V227.4h1V227.3h1V234.8h1V229.7h1V229.8h1V246.3h1V246.4h1V247.6h1V246.3h1V246.7h1V247.0h1V247.5h1V248.4h1V248.0h1V247.4h1V247.8h1V246.9h1V247.9h1V248.1h1V248.2h1V233.9h1V224.7h1V216.8h1V217.4h1V229.3h1V238.3h1V224.3h1V217.4h1V217.4h1V222.6h1V229.3h1V219.1h1V216.3h1V213.8h1V224.4h1V233.3h1V234.6h1V233.3h1V236.6h1V244.5h1V247.7h1V248.7h1V249.9h1V250.5h1V249.9h1V250.5h1V249.9h1V249.9h1V250.5h1V250.5h1V250.5h1V250.5h1V250.5h1V249.9h1V250.5h1V249.9h1V250.5h1V249.9h1V249.9h1V250.5h1V250.5h1V250.5h1V250.5h1V249.9h1V249.9h1V250.5h1V225.6h1V215.7h1V217.0h1V224.7h1V224.7h1V233.6h1V231.8h1V224.6h1V220.7h1V214.3h1V221.6h1V218.7h1V223.5h1V223.5h1V221.9h1V232.3h1V216.2h1V223.6h1V232.0h1V225.7h1V228.8h1V230.9h1V245.3h1V249.1h1V248.8h1V249.5h1V250.5h1V250.5h1V250.5h1V250.5h1V250.5h1V250.5h1V250.5h1V250.5h1V250.5h1V249.9h1V250.5h1V250.5h1V250.5h1V250.5h1V250.5h1V250.5h1V250.5h1V250.5h1V250.5h1V250.5h1V250.5h1V249.9h1V232.1h1V235.3h1V222.4h1V211.0h1V213.5h1V223.5h1V223.0h1V218.1h1V219.3h1V221.7h1V219.1h1V218.2h1V221.3h1V217.6h1V219.0h1V223.9h1V223.9h1V225.8h1V232.4h1V225.2h1V226.1h1V217.4h1V217.4h1V222.1h1V221.8h1V226.0h1V224.6h1V225.6h1V228.9h1V230.7h1V231.2h1V243.8h1V248.5h1V248.6h1V248.4h1V247.5h1V248.6h1V248.2h1V248.2h1V239.1h1V233.3h1V230.2h1V222.1h1V222.6h1V233.9h1V225.7h1V226.2h1V224.1h1V223.1h1V223.3h1V217.7h1V218.8h1V219.6h1V219.8h1V224.4h1V233.4h1V219.2h1V226.6h1V223.6h1V225.2h1V232.0h1V233.0h1V234.2h1V226.9h1V235.0h1V222.5h1V218.0h1V215.7h1V214.6h1V225.6h1V212.2h1V210.9h1V216.6h1V229.5h1V229.3h1V220.3h1V221.6h1V227.6h1V224.0h1V224.9h1V229.9h1V224.4h1V228.7h1V230.5h1V226.4h1V231.8h1V227.1h1V233.5h1V240.7h1V238.2h1V248.5h1V248.8h1V250.5h1V249.9h1V250.5h1V249.9h1V249.9h1V250.5h1V250.5h1V250.5h1V250.5h1V250.5h1V249.9h1V250.5h1V249.9h1V250.5h1V250.5h1V250.5h1V250.5h1V250.5h1V250.5h1V251V251.5h-1V251.5h-1V252.1h-1V252.1h-1V251.5h-1V251.5h-1V251.5h-1V251.5h-1V251.5h-1V251.5h-1V251.5h-1V251.5h-1V251.5h-1V251.5h-1V251.5h-1V251.5h-1V251.5h-1V251.5h-1V251.5h-1V253.0h-1V253.3h-1V260.2h-1V261.3h-1V270.3h-1V261.2h-1V267.5h-1V266.7h-1V264.4h-1V266.3h-1V265.5h-1V267.8h-1V270.8h-1V272.7h-1V274.4h-1V283.2h-1V286.0h-1V281.2h-1V269.3h-1V270.3h-1V274.7h-1V270.9h-1V268.0h-1V273.9h-1V268.6h-1V269.4h-1V267.9h-1V270.8h-1V261.3h-1V263.6h-1V259.9h-1V264.3h-1V264.1h-1V267.6h-1V267.8h-1V271.6h-1V273.1h-1V264.9h-1V266.5h-1V271.1h-1V263.6h-1V270.1h-1V267.7h-1V262.0h-1V264.5h-1V268.8h-1V264.6h-1V276.1h-1V267.3h-1V275.0h-1V275.1h-1V272.8h-1V267.5h-1V253.3h-1V253.2h-1V254.1h-1V253.3h-1V253.8h-1V254.0h-1V252.9h-1V253.7h-1V259.1h-1V257.9h-1V258.5h-1V261.0h-1V265.7h-1V260.4h-1V266.8h-1V269.5h-1V272.3h-1V267.7h-1V271.0h-1V264.7h-1V263.2h-1V271.9h-1V275.6h-1V274.5h-1V277.3h-1V275.1h-1V273.7h-1V277.0h-1V267.4h-1V279.9h-1V274.1h-1V267.7h-1V272.0h-1V273.5h-1V278.9h-1V283.9h-1V270.9h-1V267.0h-1V261.3h-1V252.1h-1V251.5h-1V251.5h-1V251.5h-1V251.5h-1V251.5h-1V251.5h-1V251.5h-1V252.1h-1V251.5h-1V251.5h-1V251.5h-1V252.1h-1V251.5h-1V251.5h-1V251.5h-1V251.5h-1V251.5h-1V251.5h-1V251.5h-1V251.5h-1V251.5h-1V252.7h-1V252.4h-1V253.7h-1V256.7h-1V259.2h-1V259.8h-1V265.3h-1V265.4h-1V266.5h-1V269.3h-1V269.1h-1V271.7h-1V271.7h-1V274.2h-1V280.7h-1V275.6h-1V279.2h-1V270.1h-1V277.0h-1V269.5h-1V271.8h-1V272.6h-1V274.9h-1V278.7h-1V278.4h-1V276.9h-1V251.5h-1V251.5h-1V251.5h-1V251.5h-1V251.5h-1V251.5h-1V251.5h-1V251.5h-1V251.5h-1V251.5h-1V251.5h-1V251.5h-1V252.1h-1V251.5h-1V251.5h-1V251.5h-1V251.5h-1V251.5h-1V251.5h-1V251.5h-1V251.5h-1V251.5h-1V251.5h-1V252.2h-1V252.7h-1V252.7h-1V257.0h-1V262.9h-1V266.7h-1V267.3h-1V277.6h-1V275.4h-1V275.9h-1V274.6h-1V273.9h-1V267.1h-1V271.6h-1V276.1h-1V267.8h-1V271.0h-1V270.6h-1V278.5h-1V290.5h-1V290.5h-1V284.1h-1V274.0h-1V254.6h-1V254.0h-1V254.1h-1V255.6h-1V255.7h-1V255.9h-1V254.6h-1V254.2h-1V254.9h-1V254.6h-1V255.8h-1V255.9h-1V255.8h-1V254.8h-1V255.2h-1V267.0h-1V277.0h-1V273.5h-1V278.9h-1V276.7h-1V284.8h-1V281.8h-1V278.6h-1V288.1h-1V287.3h-1V283.9h-1V278.1h-1V270.5h-1V274.6h-1V272.9h-1V280.2h-1V286.5h-1V284.6h-1V276.5h-1V275.9h-1V278.1h-1V286.3h-1V278.2h-1V263.4h-1V254.3h-1V255.0h-1V255.2h-1V254.9h-1V254.3h-1V254.0h-1Z" fill="#66fb66"/><path d="M457 251V212.2h1V208.3h1V211.7h1V218.4h1V218.4h1V218.4h1V218.4h1V218.4h1V211.6h1V212.8h1V218.3h1V230.0h1V222.8h1V224.8h1V216.0h1V219.3h1V226.9h1V227.5h1V230.9h1V228.7h1V231.6h1V229.8h1V232.9h1V233.0h1V235.7h1V235.6h1V236.3h1V234.9h1V241.1h1V237.6h1V248.9h1V249.3h1V250.5h1V250.5h1V250.5h1V250.5h1V250.5h1V250.5h1V250.5h1V249.9h1V250.5h1V250.5h1V250.5h1V250.5h1V224.3h1V209.5h1V209.9h1V216.2h1V211.9h1V230.2h1V224.1h1V226.0h1V225.1h1V227.0h1V231.8h1V229.6h1V241.4h1V242.8h1V247.7h1V236.2h1V234.2h1V227.4h1V229.3h1V227.9h1V221.4h1V224.0h1V227.4h1V235.5h1V234.3h1V237.3h1V234.1h1V232.8h1V235.8h1V229.6h1V228.2h1V233.3h1V235.2h1V251V259.6h-1V261.2h-1V259.1h-1V267.9h-1V263.1h-1V260.0h-1V260.6h-1V260.5h-1V260.9h-1V260.7h-1V263.2h-1V264.1h-1V268.1h-1V264.6h-1V265.1h-1V266.6h-1V261.0h-1V255.4h-1V252.7h-1V255.0h-1V257.6h-1V259.1h-1V261.5h-1V264.9h-1V266.7h-1V274.3h-1V264.8h-1V272.5h-1V276.7h-1V275.0h-1V270.2h-1V267.0h-1V263.0h-1V251.5h-1V251.5h-1V251.5h-1V251.5h-1V251.5h-1V251.5h-1V251.5h-1V251.5h-1V251.5h-1V251.5h-1V251.5h-1V251.5h-1V252.4h-1V253.5h-1V258.6h-1V258.6h-1V259.8h-1V262.4h-1V267.6h-1V268.5h-1V260.8h-1V262.3h-1V263.0h-1V262.5h-1V264.8h-1V263.9h-1V267.1h-1V264.1h-1V266.3h-1V263.8h-1V266.4h-1V269.6h-1V268.2h-1V270.5h-1V265.8h-1V281.1h-1V287.0h-1V286.1h-1V292.1h-1V282.0h-1V280.8h-1V281.4h-1V285.9h-1V276.2h-1Z" fill="#fff"/><path d="M534 251V242.0h1V248.8h1V249.4h1V250.5h1V250.5h1V250.5h1V250.5h1V249.9h1V249.9h1V250.5h1V250.5h1V249.9h1V250.5h1V250.5h1V250.5h1V250.5h1V250.5h1V249.9h1V250.5h1V249.9h1V250.5h1V250.5h1V250.5h1V249.9h1V250.5h1V250.5h1V250.5h1V250.5h1V250.5h1V236.6h1V224.8h1V222.8h1V218.0h1V217.5h1V218.3h1V218.8h1V222.1h1V218.1h1V218.4h1V223.1h1V223.8h1V215.5h1V228.1h1V223.1h1V213.2h1V228.3h1V226.0h1V225.0h1V220.9h1V232.6h1V213.1h1V222.3h1V220.8h1V224.5h1V225.6h1V225.0h1V234.6h1V234.2h1V231.2h1V233.6h1V236.2h1V238.0h1V237.5h1V238.6h1V237.2h1V234.9h1V236.4h1V233.3h1V233.1h1V236.6h1V228.3h1V231.5h1V234.3h1V240.2h1V237.4h1V235.6h1V238.1h1V237.3h1V238.3h1V239.7h1V245.3h1V245.8h1V248.1h1V249.1h1V250.5h1V250.5h1V250.5h1V250.5h1V250.5h1V250.5h1V250.5h1V250.5h1V250.5h1V250.5h1V250.5h1V250.5h1V249.9h1V250.5h1V247.1h1V232.3h1V232.8h1V223.3h1V216.0h1V214.9h1V216.5h1V224.3h1V223.1h1V223.2h1V227.9h1V224.7h1V223.4h1V232.1h1V224.6h1V223.3h1V224.6h1V224.7h1V232.3h1V225.9h1V227.3h1V222.6h1V222.8h1V223.4h1V226.1h1V229.9h1V232.3h1V233.8h1V237.8h1V237.4h1V234.7h1V234.2h1V234.3h1V235.8h1V244.6h1V246.6h1V249.9h1V250.5h1V250.5h1V250.5h1V250.5h1V250.5h1V250.5h1V250.5h1V250.5h1V233.9h1V228.4h1V227.2h1V224.4h1V216.7h1V225.3h1V233.5h1V233.3h1V226.6h1V226.7h1V227.9h1V215.0h1V224.7h1V222.4h1V226.8h1V233.0h1V226.8h1V232.4h1V226.4h1V232.5h1V230.7h1V229.8h1V229.1h1V240.1h1V238.7h1V246.0h1V246.9h1V248.0h1V249.4h1V249.5h1V250.5h1V250.5h1V250.5h1V250.5h1V250.5h1V250.5h1V249.7h1V249.0h1V249.5h1V250.5h1V250.5h1V250.5h1V238.3h1V211.9h1V213.4h1V236.1h1V235.3h1V224.7h1V229.9h1V225.7h1V235.6h1V225.3h1V215.6h1V208.7h1V224.1h1V232.0h1V224.3h1V232.4h1V237.1h1V237.9h1V249.0h1V249.6h1V249.7h1V250.5h1V250.5h1V250.5h1V250.5h1V250.5h1V233.7h1V219.3h1V231.0h1V230.6h1V233.2h1V223.8h1V232.4h1V223.0h1V224.4h1V233.3h1V230.6h1V223.4h1V227.1h1V226.6h1V235.4h1V249.2h1V249.9h1V249.9h1V250.5h1V250.5h1V250.5h1V250.5h1V238.5h1V221.7h1V224.7h1V225.6h1V227.7h1V226.0h1V226.9h1V225.3h1V229.4h1V226.0h1V230.4h1V233.3h1V236.7h1V238.3h1V227.0h1V218.1h1V221.9h1V232.1h1V230.8h1V226.5h1V230.8h1V226.3h1V227.0h1V231.3h1V226.2h1V220.5h1V229.6h1V231.5h1V235.0h1V236.9h1V242.3h1V249.3h1V249.0h1V249.5h1V249.4h1V249.7h1V249.2h1V250.0h1V242.5h1V231.3h1V224.5h1V226.6h1V235.2h1V231.9h1V224.3h1V230.4h1V230.3h1V222.4h1V232.6h1V226.1h1V231.1h1V230.4h1V233.1h1V226.1h1V225.2h1V225.7h1V217.0h1V231.9h1V238.9h1V248.3h1V249.2h1V249.4h1V249.0h1V249.0h1V249.2h1V249.2h1V237.0h1V232.2h1V228.1h1V225.0h1V216.6h1V215.8h1V225.7h1V226.0h1V236.7h1V233.5h1V239.2h1V233.8h1V231.7h1V231.9h1V235.8h1V229.6h1V232.1h1V233.0h1V231.2h1V231.3h1V228.7h1V233.6h1V244.1h1V249.7h1V249.7h1V250.5h1V250.5h1V250.5h1V249.9h1V250.5h1V250.5h1V250.5h1V250.5h1V249.9h1V251V251.5h-1V251.5h-1V251.5h-1V251.5h-1V251.5h-1V251.5h-1V251.5h-1V251.5h-1V251.5h-1V252.5h-1V252.8h-1V255.1h-1V261.4h-1V264.1h-1V267.7h-1V267.3h-1V266.6h-1V265.3h-1V264.5h-1V264.9h-1V265.1h-1V267.9h-1V266.2h-1V264.4h-1V264.7h-1V267.9h-1V266.7h-1V268.1h-1V270.4h-1V273.6h-1V262.0h-1V262.6h-1V259.1h-1V258.2h-1V252.7h-1V252.5h-1V252.3h-1V253.0h-1V252.5h-1V252.7h-1V253.7h-1V258.3h-1V264.5h-1V270.5h-1V265.7h-1V261.0h-1V264.2h-1V266.3h-1V265.7h-1V263.8h-1V264.1h-1V266.6h-1V270.2h-1V269.5h-1V271.8h-1V266.2h-1V267.9h-1V268.6h-1V264.2h-1V267.9h-1V273.0h-1V259.1h-1V252.5h-1V252.2h-1V252.8h-1V252.4h-1V253.2h-1V253.0h-1V252.6h-1V257.3h-1V258.8h-1V261.5h-1V262.5h-1V264.2h-1V261.2h-1V268.8h-1V264.1h-1V266.2h-1V264.8h-1V264.2h-1V262.9h-1V262.2h-1V269.8h-1V270.9h-1V276.7h-1V263.8h-1V264.9h-1V260.1h-1V261.6h-1V265.7h-1V265.8h-1V271.0h-1V269.3h-1V265.2h-1V271.6h-1V262.8h-1V262.4h-1V268.2h-1V268.8h-1V258.7h-1V251.5h-1V251.5h-1V251.5h-1V251.5h-1V251.5h-1V252.1h-1V252.6h-1V260.4h-1V260.9h-1V265.2h-1V267.6h-1V269.5h-1V268.1h-1V278.9h-1V277.4h-1V264.4h-1V263.8h-1V260.5h-1V260.9h-1V268.5h-1V264.6h-1V266.3h-1V251.5h-1V252.1h-1V251.5h-1V251.5h-1V251.5h-1V252.3h-1V252.2h-1V252.5h-1V257.3h-1V260.1h-1V263.1h-1V259.8h-1V266.2h-1V269.4h-1V272.3h-1V266.4h-1V265.5h-1V268.2h-1V271.5h-1V289.7h-1V287.1h-1V273.5h-1V264.0h-1V272.6h-1V275.2h-1V258.9h-1V251.5h-1V251.5h-1V251.5h-1V252.3h-1V252.8h-1V252.5h-1V251.5h-1V251.5h-1V251.5h-1V251.5h-1V252.1h-1V251.5h-1V252.5h-1V253.3h-1V253.4h-1V253.9h-1V255.2h-1V258.0h-1V258.2h-1V260.2h-1V260.4h-1V266.2h-1V260.0h-1V263.9h-1V265.6h-1V273.5h-1V272.0h-1V280.1h-1V271.2h-1V273.4h-1V269.0h-1V268.3h-1V269.8h-1V263.7h-1V272.2h-1V263.7h-1V271.7h-1V270.0h-1V271.8h-1V270.9h-1V268.3h-1V264.2h-1V251.5h-1V251.5h-1V252.1h-1V251.5h-1V251.5h-1V252.1h-1V251.5h-1V251.5h-1V252.6h-1V252.9h-1V255.1h-1V258.4h-1V260.3h-1V257.2h-1V259.0h-1V256.5h-1V258.8h-1V259.6h-1V261.6h-1V265.7h-1V267.5h-1V271.3h-1V270.7h-1V270.7h-1V267.6h-1V270.8h-1V265.6h-1V264.8h-1V264.2h-1V267.6h-1V265.8h-1V267.1h-1V263.1h-1V276.8h-1V275.2h-1V273.0h-1V273.1h-1V271.5h-1V266.1h-1V279.4h-1V273.0h-1V266.7h-1V265.1h-1V265.4h-1V255.8h-1V252.1h-1V251.5h-1V251.5h-1V251.5h-1V251.5h-1V251.5h-1V252.1h-1V251.5h-1V251.5h-1V251.5h-1V251.5h-1V251.5h-1V251.5h-1V251.5h-1V252.5h-1V253.6h-1V254.5h-1V256.7h-1V256.5h-1V259.8h-1V260.0h-1V259.1h-1V259.8h-1V262.2h-1V259.9h-1V259.3h-1V259.5h-1V264.6h-1V261.5h-1V259.0h-1V257.8h-1V260.6h-1V262.0h-1V256.6h-1V258.4h-1V257.5h-1V257.5h-1V256.8h-1V260.6h-1V265.1h-1V257.8h-1V259.0h-1V264.4h-1V259.9h-1V265.2h-1V267.6h-1V271.0h-1V271.5h-1V272.1h-1V262.4h-1V268.5h-1V266.8h-1V267.7h-1V268.1h-1V263.2h-1V271.5h-1V270.7h-1V272.7h-1V275.2h-1V277.2h-1V272.1h-1V267.4h-1V276.4h-1V278.5h-1V275.7h-1V275.3h-1V265.1h-1V262.7h-1V260.8h-1V251.5h-1V251.5h-1V251.5h-1V252.1h-1V251.5h-1V251.5h-1V251.5h-1V251.5h-1V252.1h-1V251.5h-1V251.5h-1V251.5h-1V252.1h-1V251.5h-1V252.1h-1V251.5h-1V251.5h-1V251.5h-1V251.5h-1V251.5h-1V252.1h-1V251.5h-1V251.5h-1V251.5h-1V251.5h-1V251.5h-1V252.3h-1V252.4h-1V253.7h-1Z" fill="#66fb66"/><rect x="207" y="330" width="661" height="1" fill="#8c98ac"/><rect x="207" y="452" width="661" height="1" fill="#8c98ac"/><rect x="457" y="330" width="77" height="1" fill="#5c94d4"/><rect x="457" y="452" width="77" height="1" fill="#5c94d4"/><path d="M207 390V386.7h1V385.5h1V385.8h1V386.8h1V386.8h1V386.7h1V374.2h1V368.2h1V374.1h1V365.1h1V370.6h1V369.6h1V366.7h1V363.1h1V364.4h1V369.8h1V372.4h1V366.8h1V367.8h1V362.7h1V352.6h1V351.2h1V356.9h1V355.9h1V357.6h1V366.4h1V366.3h1V373.8h1V368.7h1V368.8h1V385.3h1V385.4h1V386.6h1V385.3h1V385.7h1V386.0h1V386.5h1V387.4h1V387.0h1V386.4h1V386.8h1V385.9h1V386.9h1V387.1h1V387.2h1V372.9h1V363.7h1V355.8h1V356.4h1V368.3h1V377.3h1V363.3h1V356.4h1V356.4h1V361.6h1V368.3h1V358.1h1V355.3h1V352.8h1V363.4h1V372.3h1V373.6h1V372.3h1V375.6h1V383.5h1V386.7h1V387.7h1V388.9h1V389.5h1V388.9h1V389.5h1V388.9h1V388.9h1V389.5h1V389.5h1V389.5h1V389.5h1V389.5h1V388.9h1V389.5h1V388.9h1V389.5h1V388.9h1V388.9h1V389.5h1V389.5h1V389.5h1V389.5h1V388.9h1V388.9h1V389.5h1V364.6h1V354.7h1V356.0h1V363.7h1V363.7h1V372.6h1V370.8h1V363.6h1V359.7h1V353.3h1V360.6h1V357.7h1V362.5h1V362.5h1V360.9h1V371.3h1V355.2h1V362.6h1V371.0h1V364.7h1V367.8h1V369.9h1V384.3h1V388.1h1V387.8h1V388.5h1V389.5h1V389.5h1V389.5h1V389.5h1V389.5h1V389.5h1V389.5h1V389.5h1V389.5h1V388.9h1V389.5h1V389.5h1V389.5h1V389.5h1V389.5h1V389.5h1V389.5h1V389.5h1V389.5h1V389.5h1V389.5h1V388.9h1V371.1h1V374.3h1V361.4h1V350.0h1V352.5h1V362.5h1V362.0h1V357.1h1V358.3h1V360.7h1V358.1h1V357.2h1V360.3h1V356.6h1V358.0h1V362.9h1V362.9h1V364.8h1V371.4h1V364.2h1V365.1h1V356.4h1V356.4h1V361.1h1V360.8h1V365.0h1V363.6h1V364.6h1V367.9h1V369.7h1V370.2h1V382.8h1V387.5h1V387.6h1V387.4h1V386.5h1V387.6h1V387.2h1V387.2h1V378.1h1V372.3h1V369.2h1V361.1h1V361.6h1V372.9h1V364.7h1V365.2h1V363.1h1V362.1h1V362.3h1V356.7h1V357.8h1V358.6h1V358.8h1V363.4h1V372.4h1V358.2h1V365.6h1V362.6h1V364.2h1V371.0h1V372.0h1V373.2h1V365.9h1V374.0h1V361.5h1V357.0h1V354.7h1V353.6h1V364.6h1V351.2h1V349.9h1V355.6h1V368.5h1V368.3h1V359.3h1V360.6h1V366.6h1V363.0h1V363.9h1V368.9h1V363.4h1V367.7h1V369.5h1V365.4h1V370.8h1V366.1h1V372.5h1V379.7h1V377.2h1V387.5h1V387.8h1V389.5h1V388.9h1V389.5h1V388.9h1V388.9h1V389.5h1V389.5h1V389.5h1V389.5h1V389.5h1V388.9h1V389.5h1V388.9h1V389.5h1V389.5h1V389.5h1V389.5h1V389.5h1V389.5h1V390V390.5h-1V390.5h-1V391.1h-1V391.1h-1V390.5h-1V390.5h-1V390.5h-1V390.5h-1V390.5h-1V390.5h-1V390.5h-1V390.5h-1V390.5h-1V390.5h-1V390.5h-1V390.5h-1V390.5h-1V390.5h-1V390.5h-1V392.0h-1V392.3h-1V399.2h-1V400.3h-1V409.3h-1V400.2h-1V406.5h-1V405.7h-1V403.4h-1V405.3h-1V404.5h-1V406.8h-1V409.8h-1V411.7h-1V413.4h-1V422.2h-1V425.0h-1V420.2h-1V408.3h-1V409.3h-1V413.7h-1V409.9h-1V407.0h-1V412.9h-1V407.6h-1V408.4h-1V406.9h-1V409.8h-1V400.3h-1V402.6h-1V398.9h-1V403.3h-1V403.1h-1V406.6h-1V406.8h-1V410.6h-1V412.1h-1V403.9h-1V405.5h-1V410.1h-1V402.6h-1V409.1h-1V406.7h-1V401.0h-1V403.5h-1V407.8h-1V403.6h-1V415.1h-1V406.3h-1V414.0h-1V414.1h-1V411.8h-1V406.5h-1V392.3h-1V392.2h-1V393.1h-1V392.3h-1V392.8h-1V393.0h-1V391.9h-1V392.7h-1V398.1h-1V396.9h-1V397.5h-1V400.0h-1V404.7h-1V399.4h-1V405.8h-1V408.5h-1V411.3h-1V406.7h-1V410.0h-1V403.7h-1V402.2h-1V410.9h-1V414.6h-1V413.5h-1V416.3h-1V414.1h-1V412.7h-1V416.0h-1V406.4h-1V418.9h-1V413.1h-1V406.7h-1V411.0h-1V412.5h-1V417.9h-1V422.9h-1V409.9h-1V406.0h-1V400.3h-1V391.1h-1V390.5h-1V390.5h-1V390.5h-1V390.5h-1V390.5h-1V390.5h-1V390.5h-1V391.1h-1V390.5h-1V390.5h-1V390.5h-1V391.1h-1V390.5h-1V390.5h-1V390.5h-1V390.5h-1V390.5h-1V390.5h-1V390.5h-1V390.5h-1V390.5h-1V391.7h-1V391.4h-1V392.7h-1V395.7h-1V398.2h-1V398.8h-1V404.3h-1V404.4h-1V405.5h-1V408.3h-1V408.1h-1V410.7h-1V410.7h-1V413.2h-1V419.7h-1V414.6h-1V418.2h-1V409.1h-1V416.0h-1V408.5h-1V410.8h-1V411.6h-1V413.9h-1V417.7h-1V417.4h-1V415.9h-1V390.5h-1V390.5h-1V390.5h-1V390.5h-1V390.5h-1V390.5h-1V390.5h-1V390.5h-1V390.5h-1V390.5h-1V390.5h-1V390.5h-1V391.1h-1V390.5h-1V390.5h-1V390.5h-1V390.5h-1V390.5h-1V390.5h-1V390.5h-1V390.5h-1V390.5h-1V390.5h-1V391.2h-1V391.7h-1V391.7h-1V396.0h-1V401.9h-1V405.7h-1V406.3h-1V416.6h-1V414.4h-1V414.9h-1V413.6h-1V412.9h-1V406.1h-1V410.6h-1V415.1h-1V406.8h-1V410.0h-1V409.6h-1V417.5h-1V429.5h-1V429.5h-1V423.1h-1V413.0h-1V393.6h-1V393.0h-1V393.1h-1V394.6h-1V394.7h-1V394.9h-1V393.6h-1V393.2h-1V393.9h-1V393.6h-1V394.8h-1V394.9h-1V394.8h-1V393.8h-1V394.2h-1V406.0h-1V416.0h-1V412.5h-1V417.9h-1V415.7h-1V423.8h-1V420.8h-1V417.6h-1V427.1h-1V426.3h-1V422.9h-1V417.1h-1V409.5h-1V413.6h-1V411.9h-1V419.2h-1V425.5h-1V423.6h-1V415.5h-1V414.9h-1V417.1h-1V425.3h-1V417.2h-1V402.4h-1V393.3h-1V394.0h-1V394.2h-1V393.9h-1V393.3h-1V393.0h-1Z" fill="#66fb66"/><path d="M457 390V351.2h1V347.3h1V350.7h1V357.4h1V357.4h1V357.4h1V357.4h1V357.4h1V350.6h1V351.8h1V357.3h1V369.0h1V361.8h1V363.8h1V355.0h1V358.3h1V365.9h1V366.5h1V369.9h1V367.7h1V370.6h1V368.8h1V371.9h1V372.0h1V374.7h1V374.6h1V375.3h1V373.9h1V380.1h1V376.6h1V387.9h1V388.3h1V389.5h1V389.5h1V389.5h1V389.5h1V389.5h1V389.5h1V389.5h1V388.9h1V389.5h1V389.5h1V389.5h1V389.5h1V363.3h1V348.5h1V348.9h1V355.2h1V350.9h1V369.2h1V363.1h1V365.0h1V364.1h1V366.0h1V370.8h1V368.6h1V380.4h1V381.8h1V386.7h1V375.2h1V373.2h1V366.4h1V368.3h1V366.9h1V360.4h1V363.0h1V366.4h1V374.5h1V373.3h1V376.3h1V373.1h1V371.8h1V374.8h1V368.6h1V367.2h1V372.3h1V374.2h1V390V398.6h-1V400.2h-1V398.1h-1V406.9h-1V402.1h-1V399.0h-1V399.6h-1V399.5h-1V399.9h-1V399.7h-1V402.2h-1V403.1h-1V407.1h-1V403.6h-1V404.1h-1V405.6h-1V400.0h-1V394.4h-1V391.7h-1V394.0h-1V396.6h-1V398.1h-1V400.5h-1V403.9h-1V405.7h-1V413.3h-1V403.8h-1V411.5h-1V415.7h-1V414.0h-1V409.2h-1V406.0h-1V402.0h-1V390.5h-1V390.5h-1V390.5h-1V390.5h-1V390.5h-1V390.5h-1V390.5h-1V390.5h-1V390.5h-1V390.5h-1V390.5h-1V390.5h-1V391.4h-1V392.5h-1V397.6h-1V397.6h-1V398.8h-1V401.4h-1V406.6h-1V407.5h-1V399.8h-1V401.3h-1V402.0h-1V401.5h-1V403.8h-1V402.9h-1V406.1h-1V403.1h-1V405.3h-1V402.8h-1V405.4h-1V408.6h-1V407.2h-1V409.5h-1V404.8h-1V420.1h-1V426.0h-1V425.1h-1V431.1h-1V421.0h-1V419.8h-1V420.4h-1V424.9h-1V415.2h-1Z" fill="#fff"/><path d="M534 390V381.0h1V387.8h1V388.4h1V389.5h1V389.5h1V389.5h1V389.5h1V388.9h1V388.9h1V389.5h1V389.5h1V388.9h1V389.5h1V389.5h1V389.5h1V389.5h1V389.5h1V388.9h1V389.5h1V388.9h1V389.5h1V389.5h1V389.5h1V388.9h1V389.5h1V389.5h1V389.5h1V389.5h1V389.5h1V375.6h1V363.8h1V361.8h1V357.0h1V356.5h1V357.3h1V357.8h1V361.1h1V357.1h1V357.4h1V362.1h1V362.8h1V354.5h1V367.1h1V362.1h1V352.2h1V367.3h1V365.0h1V364.0h1V359.9h1V371.6h1V352.1h1V361.3h1V359.8h1V363.5h1V364.6h1V364.0h1V373.6h1V373.2h1V370.2h1V372.6h1V375.2h1V377.0h1V376.5h1V377.6h1V376.2h1V373.9h1V375.4h1V372.3h1V372.1h1V375.6h1V367.3h1V370.5h1V373.3h1V379.2h1V376.4h1V374.6h1V377.1h1V376.3h1V377.3h1V378.7h1V384.3h1V384.8h1V387.1h1V388.1h1V389.5h1V389.5h1V389.5h1V389.5h1V389.5h1V389.5h1V389.5h1V389.5h1V389.5h1V389.5h1V389.5h1V389.5h1V388.9h1V389.5h1V386.1h1V371.3h1V371.8h1V362.3h1V355.0h1V353.9h1V355.5h1V363.3h1V362.1h1V362.2h1V366.9h1V363.7h1V362.4h1V371.1h1V363.6h1V362.3h1V363.6h1V363.7h1V371.3h1V364.9h1V366.3h1V361.6h1V361.8h1V362.4h1V365.1h1V368.9h1V371.3h1V372.8h1V376.8h1V376.4h1V373.7h1V373.2h1V373.3h1V374.8h1V383.6h1V385.6h1V388.9h1V389.5h1V389.5h1V389.5h1V389.5h1V389.5h1V389.5h1V389.5h1V389.5h1V372.9h1V367.4h1V366.2h1V363.4h1V355.7h1V364.3h1V372.5h1V372.3h1V365.6h1V365.7h1V366.9h1V354.0h1V363.7h1V361.4h1V365.8h1V372.0h1V365.8h1V371.4h1V365.4h1V371.5h1V369.7h1V368.8h1V368.1h1V379.1h1V377.7h1V385.0h1V385.9h1V387.0h1V388.4h1V388.5h1V389.5h1V389.5h1V389.5h1V389.5h1V389.5h1V389.5h1V388.7h1V388.0h1V388.5h1V389.5h1V389.5h1V389.5h1V377.3h1V350.9h1V352.4h1V375.1h1V374.3h1V363.7h1V368.9h1V364.7h1V374.6h1V364.3h1V354.6h1V347.7h1V363.1h1V371.0h1V363.3h1V371.4h1V376.1h1V376.9h1V388.0h1V388.6h1V388.7h1V389.5h1V389.5h1V389.5h1V389.5h1V389.5h1V372.7h1V358.3h1V370.0h1V369.6h1V372.2h1V362.8h1V371.4h1V362.0h1V363.4h1V372.3h1V369.6h1V362.4h1V366.1h1V365.6h1V374.4h1V388.2h1V388.9h1V388.9h1V389.5h1V389.5h1V389.5h1V389.5h1V377.5h1V360.7h1V363.7h1V364.6h1V366.7h1V365.0h1V365.9h1V364.3h1V368.4h1V365.0h1V369.4h1V372.3h1V375.7h1V377.3h1V366.0h1V357.1h1V360.9h1V371.1h1V369.8h1V365.5h1V369.8h1V365.3h1V366.0h1V370.3h1V365.2h1V359.5h1V368.6h1V370.5h1V374.0h1V375.9h1V381.3h1V388.3h1V388.0h1V388.5h1V388.4h1V388.7h1V388.2h1V389.0h1V381.5h1V370.3h1V363.5h1V365.6h1V374.2h1V370.9h1V363.3h1V369.4h1V369.3h1V361.4h1V371.6h1V365.1h1V370.1h1V369.4h1V372.1h1V365.1h1V364.2h1V364.7h1V356.0h1V370.9h1V377.9h1V387.3h1V388.2h1V388.4h1V388.0h1V388.0h1V388.2h1V388.2h1V376.0h1V371.2h1V367.1h1V364.0h1V355.6h1V354.8h1V364.7h1V365.0h1V375.7h1V372.5h1V378.2h1V372.8h1V370.7h1V370.9h1V374.8h1V368.6h1V371.1h1V372.0h1V370.2h1V370.3h1V367.7h1V372.6h1V383.1h1V388.7h1V388.7h1V389.5h1V389.5h1V389.5h1V388.9h1V389.5h1V389.5h1V389.5h1V389.5h1V388.9h1V390V390.5h-1V390.5h-1V390.5h-1V390.5h-1V390.5h-1V390.5h-1V390.5h-1V390.5h-1V390.5h-1V391.5h-1V391.8h-1V394.1h-1V400.4h-1V403.1h-1V406.7h-1V406.3h-1V405.6h-1V404.3h-1V403.5h-1V403.9h-1V404.1h-1V406.9h-1V405.2h-1V403.4h-1V403.7h-1V406.9h-1V405.7h-1V407.1h-1V409.4h-1V412.6h-1V401.0h-1V401.6h-1V398.1h-1V397.2h-1V391.7h-1V391.5h-1V391.3h-1V392.0h-1V391.5h-1V391.7h-1V392.7h-1V397.3h-1V403.5h-1V409.5h-1V404.7h-1V400.0h-1V403.2h-1V405.3h-1V404.7h-1V402.8h-1V403.1h-1V405.6h-1V409.2h-1V408.5h-1V410.8h-1V405.2h-1V406.9h-1V407.6h-1V403.2h-1V406.9h-1V412.0h-1V398.1h-1V391.5h-1V391.2h-1V391.8h-1V391.4h-1V392.2h-1V392.0h-1V391.6h-1V396.3h-1V397.8h-1V400.5h-1V401.5h-1V403.2h-1V400.2h-1V407.8h-1V403.1h-1V405.2h-1V403.8h-1V403.2h-1V401.9h-1V401.2h-1V408.8h-1V409.9h-1V415.7h-1V402.8h-1V403.9h-1V399.1h-1V400.6h-1V404.7h-1V404.8h-1V410.0h-1V408.3h-1V404.2h-1V410.6h-1V401.8h-1V401.4h-1V407.2h-1V407.8h-1V397.7h-1V390.5h-1V390.5h-1V390.5h-1V390.5h-1V390.5h-1V391.1h-1V391.6h-1V399.4h-1V399.9h-1V404.2h-1V406.6h-1V408.5h-1V407.1h-1V417.9h-1V416.4h-1V403.4h-1V402.8h-1V399.5h-1V399.9h-1V407.5h-1V403.6h-1V405.3h-1V390.5h-1V391.1h-1V390.5h-1V390.5h-1V390.5h-1V391.3h-1V391.2h-1V391.5h-1V396.3h-1V399.1h-1V402.1h-1V398.8h-1V405.2h-1V408.4h-1V411.3h-1V405.4h-1V404.5h-1V407.2h-1V410.5h-1V428.7h-1V426.1h-1V412.5h-1V403.0h-1V411.6h-1V414.2h-1V397.9h-1V390.5h-1V390.5h-1V390.5h-1V391.3h-1V391.8h-1V391.5h-1V390.5h-1V390.5h-1V390.5h-1V390.5h-1V391.1h-1V390.5h-1V391.5h-1V392.3h-1V392.4h-1V392.9h-1V394.2h-1V397.0h-1V397.2h-1V399.2h-1V399.4h-1V405.2h-1V399.0h-1V402.9h-1V404.6h-1V412.5h-1V411.0h-1V419.1h-1V410.2h-1V412.4h-1V408.0h-1V407.3h-1V408.8h-1V402.7h-1V411.2h-1V402.7h-1V410.7h-1V409.0h-1V410.8h-1V409.9h-1V407.3h-1V403.2h-1V390.5h-1V390.5h-1V391.1h-1V390.5h-1V390.5h-1V391.1h-1V390.5h-1V390.5h-1V391.6h-1V391.9h-1V394.1h-1V397.4h-1V399.3h-1V396.2h-1V398.0h-1V395.5h-1V397.8h-1V398.6h-1V400.6h-1V404.7h-1V406.5h-1V410.3h-1V409.7h-1V409.7h-1V406.6h-1V409.8h-1V404.6h-1V403.8h-1V403.2h-1V406.6h-1V404.8h-1V406.1h-1V402.1h-1V415.8h-1V414.2h-1V412.0h-1V412.1h-1V410.5h-1V405.1h-1V418.4h-1V412.0h-1V405.7h-1V404.1h-1V404.4h-1V394.8h-1V391.1h-1V390.5h-1V390.5h-1V390.5h-1V390.5h-1V390.5h-1V391.1h-1V390.5h-1V390.5h-1V390.5h-1V390.5h-1V390.5h-1V390.5h-1V390.5h-1V391.5h-1V392.6h-1V393.5h-1V395.7h-1V395.5h-1V398.8h-1V399.0h-1V398.1h-1V398.8h-1V401.2h-1V398.9h-1V398.3h-1V398.5h-1V403.6h-1V400.5h-1V398.0h-1V396.8h-1V399.6h-1V401.0h-1V395.6h-1V397.4h-1V396.5h-1V396.5h-1V395.8h-1V399.6h-1V404.1h-1V396.8h-1V398.0h-1V403.4h-1V398.9h-1V404.2h-1V406.6h-1V410.0h-1V410.5h-1V411.1h-1V401.4h-1V407.5h-1V405.8h-1V406.7h-1V407.1h-1V402.2h-1V410.5h-1V409.7h-1V411.7h-1V414.2h-1V416.2h-1V411.1h-1V406.4h-1V415.4h-1V417.5h-1V414.7h-1V414.3h-1V404.1h-1V401.7h-1V399.8h-1V390.5h-1V390.5h-1V390.5h-1V391.1h-1V390.5h-1V390.5h-1V390.5h-1V390.5h-1V391.1h-1V390.5h-1V390.5h-1V390.5h-1V391.1h-1V390.5h-1V391.1h-1V390.5h-1V390.5h-1V390.5h-1V390.5h-1V390.5h-1V391.1h-1V390.5h-1V390.5h-1V390.5h-1V390.5h-1V390.5h-1V391.3h-1V391.4h-1V392.7h-1Z" fill="#66fb66"/><rect x="207" y="321" width="661" height="2" fill="#f4f4f4"/><path d="M457 179h5.500l-5.500 5.500zM534 179h-5.500l5.500 5.500zM457 464h5.500l-5.500-5.500zM534 464h-5.500l5.500-5.500z" fill="#f8e400" shape-rendering="auto"/></svg><div class="sc" style="left:881px;top:170.5px;font-size:9.4px">smpl</div><div class="sc" style="left:884px;top:190.3px">30000</div><div class="sc" style="left:884px;top:199.8px">25000</div><div class="sc" style="left:884px;top:209.3px">20000</div><div class="sc" style="left:884px;top:218.8px">15000</div><div class="sc" style="left:884px;top:228.3px">10000</div><div class="sc" style="left:884px;top:237.8px">5000</div><div class="sc" style="left:884px;top:247.3px">0</div><div class="sc" style="left:884px;top:256.8px">5000</div><div class="sc" style="left:884px;top:266.3px">10000</div><div class="sc" style="left:884px;top:275.8px">15000</div><div class="sc" style="left:884px;top:285.3px">20000</div><div class="sc" style="left:884px;top:294.8px">25000</div><div class="sc" style="left:884px;top:304.3px">30000</div><div class="sc" style="left:884px;top:329.3px">30000</div><div class="sc" style="left:884px;top:338.8px">25000</div><div class="sc" style="left:884px;top:348.3px">20000</div><div class="sc" style="left:884px;top:357.8px">15000</div><div class="sc" style="left:884px;top:367.3px">10000</div><div class="sc" style="left:884px;top:376.8px">5000</div><div class="sc" style="left:884px;top:386.3px">0</div><div class="sc" style="left:884px;top:395.8px">5000</div><div class="sc" style="left:884px;top:405.3px">10000</div><div class="sc" style="left:884px;top:414.8px">15000</div><div class="sc" style="left:884px;top:424.3px">20000</div><div class="sc" style="left:884px;top:433.8px">25000</div><div class="sc" style="left:884px;top:443.3px">30000</div><svg class="a" style="left:0;top:0" width="969" height="605" viewBox="0 0 969 605" shape-rendering="crispEdges"><rect x="867" y="179" width="1" height="285" fill="#b8b8b8"/><rect x="868" y="170" width="1" height="294" fill="#f2f2ee"/><rect x="870" y="186" width="7" height="1" fill="#222"/><rect x="870" y="191" width="4" height="1" fill="#222"/><rect x="870" y="195" width="7" height="1" fill="#222"/><rect x="870" y="200" width="4" height="1" fill="#222"/><rect x="870" y="205" width="7" height="1" fill="#222"/><rect x="870" y="210" width="4" height="1" fill="#222"/><rect x="870" y="214" width="7" height="1" fill="#222"/><rect x="870" y="219" width="4" height="1" fill="#222"/><rect x="870" y="224" width="7" height="1" fill="#222"/><rect x="870" y="228" width="4" height="1" fill="#222"/><rect x="870" y="233" width="7" height="1" fill="#222"/><rect x="870" y="238" width="4" height="1" fill="#222"/><rect x="870" y="243" width="7" height="1" fill="#222"/><rect x="870" y="247" width="4" height="1" fill="#222"/><rect x="870" y="252" width="7" height="1" fill="#222"/><rect x="870" y="257" width="4" height="1" fill="#222"/><rect x="870" y="262" width="7" height="1" fill="#222"/><rect x="870" y="266" width="4" height="1" fill="#222"/><rect x="870" y="271" width="7" height="1" fill="#222"/><rect x="870" y="276" width="4" height="1" fill="#222"/><rect x="870" y="281" width="7" height="1" fill="#222"/><rect x="870" y="285" width="4" height="1" fill="#222"/><rect x="870" y="290" width="7" height="1" fill="#222"/><rect x="870" y="295" width="4" height="1" fill="#222"/><rect x="870" y="300" width="7" height="1" fill="#222"/><rect x="870" y="304" width="4" height="1" fill="#222"/><rect x="870" y="309" width="7" height="1" fill="#222"/><rect x="870" y="314" width="4" height="1" fill="#222"/><rect x="870" y="319" width="7" height="1" fill="#222"/><rect x="870" y="325" width="7" height="1" fill="#222"/><rect x="870" y="330" width="4" height="1" fill="#222"/><rect x="870" y="334" width="7" height="1" fill="#222"/><rect x="870" y="339" width="4" height="1" fill="#222"/><rect x="870" y="344" width="7" height="1" fill="#222"/><rect x="870" y="348" width="4" height="1" fill="#222"/><rect x="870" y="353" width="7" height="1" fill="#222"/><rect x="870" y="358" width="4" height="1" fill="#222"/><rect x="870" y="363" width="7" height="1" fill="#222"/><rect x="870" y="367" width="4" height="1" fill="#222"/><rect x="870" y="372" width="7" height="1" fill="#222"/><rect x="870" y="377" width="4" height="1" fill="#222"/><rect x="870" y="382" width="7" height="1" fill="#222"/><rect x="870" y="386" width="4" height="1" fill="#222"/><rect x="870" y="391" width="7" height="1" fill="#222"/><rect x="870" y="396" width="4" height="1" fill="#222"/><rect x="870" y="401" width="7" height="1" fill="#222"/><rect x="870" y="405" width="4" height="1" fill="#222"/><rect x="870" y="410" width="7" height="1" fill="#222"/><rect x="870" y="415" width="4" height="1" fill="#222"/><rect x="870" y="420" width="7" height="1" fill="#222"/><rect x="870" y="424" width="4" height="1" fill="#222"/><rect x="870" y="429" width="7" height="1" fill="#222"/><rect x="870" y="434" width="4" height="1" fill="#222"/><rect x="870" y="439" width="7" height="1" fill="#222"/><rect x="870" y="443" width="4" height="1" fill="#222"/><rect x="870" y="448" width="7" height="1" fill="#222"/><rect x="870" y="453" width="4" height="1" fill="#222"/><rect x="870" y="458" width="7" height="1" fill="#222"/><rect x="869" y="320" width="40" height="1" fill="#8c8c8c"/><rect x="869" y="322" width="40" height="1" fill="#8c8c8c"/><rect x="909" y="169" width="2" height="345" fill="#dcf0f0"/><rect x="207" y="465" width="1" height="6" fill="#111"/><rect x="228" y="466" width="1" height="3" fill="#111"/><rect x="249" y="466" width="1" height="3" fill="#111"/><rect x="269" y="466" width="1" height="3" fill="#111"/><rect x="290" y="466" width="1" height="3" fill="#111"/><rect x="311" y="466" width="1" height="4" fill="#111"/><rect x="332" y="466" width="1" height="3" fill="#111"/><rect x="352" y="466" width="1" height="3" fill="#111"/><rect x="373" y="466" width="1" height="3" fill="#111"/><rect x="394" y="466" width="1" height="3" fill="#111"/><rect x="415" y="466" width="1" height="4" fill="#111"/><rect x="435" y="466" width="1" height="3" fill="#111"/><rect x="456" y="466" width="1" height="3" fill="#111"/><rect x="477" y="466" width="1" height="3" fill="#111"/><rect x="497" y="466" width="1" height="3" fill="#111"/><rect x="518" y="466" width="1" height="4" fill="#111"/><rect x="539" y="466" width="1" height="3" fill="#111"/><rect x="560" y="466" width="1" height="3" fill="#111"/><rect x="580" y="466" width="1" height="3" fill="#111"/><rect x="601" y="466" width="1" height="3" fill="#111"/><rect x="622" y="466" width="1" height="4" fill="#111"/><rect x="643" y="466" width="1" height="3" fill="#111"/><rect x="663" y="466" width="1" height="3" fill="#111"/><rect x="684" y="466" width="1" height="3" fill="#111"/><rect x="705" y="466" width="1" height="3" fill="#111"/><rect x="725" y="466" width="1" height="4" fill="#111"/><rect x="746" y="466" width="1" height="3" fill="#111"/><rect x="767" y="466" width="1" height="3" fill="#111"/><rect x="788" y="466" width="1" height="3" fill="#111"/><rect x="808" y="466" width="1" height="3" fill="#111"/><rect x="829" y="466" width="1" height="4" fill="#111"/><rect x="850" y="466" width="1" height="3" fill="#111"/></svg><div class="sc" style="left:208px;top:474px;font-size:9.4px">smpl</div><div class="sc" style="left:281.4px;top:474px;width:60px;text-align:center">500000</div><div class="sc" style="left:385.0px;top:474px;width:60px;text-align:center">1000000</div><div class="sc" style="left:488.7px;top:474px;width:60px;text-align:center">1500000</div><div class="sc" style="left:592.3px;top:474px;width:60px;text-align:center">2000000</div><div class="sc" style="left:696.0px;top:474px;width:60px;text-align:center">2500000</div><div class="sc" style="left:799.6px;top:474px;width:60px;text-align:center">3000000</div><div class="a" style="left:207px;top:487px;width:598px;height:13px;background:linear-gradient(180deg,#fff,#f2f1ec)"></div><div class="sbtn" style="left:208px;top:488px;width:14px;height:11px"></div><div class="sbtn" style="left:790px;top:488px;width:14px;height:11px"></div><svg class="a" style="left:211px;top:490px" width="6" height="8"><path d="M5 0L0 4L5 8z" fill="#3c4654"/></svg><svg class="a" style="left:795px;top:490px" width="6" height="8"><path d="M0 0L5 4L0 8z" fill="#3c4654"/></svg><div class="a" style="left:207px;top:501px;width:598px;height:13px;background:linear-gradient(180deg,#fff,#f2f1ec)"></div><div class="sbtn" style="left:208px;top:502px;width:14px;height:11px"></div><div class="sbtn" style="left:790px;top:502px;width:14px;height:11px"></div><svg class="a" style="left:211px;top:504px" width="6" height="8"><path d="M5 0L0 4L5 8z" fill="#3c4654"/></svg><svg class="a" style="left:795px;top:504px" width="6" height="8"><path d="M0 0L5 4L0 8z" fill="#3c4654"/></svg><div class="sbtn" style="left:431px;top:488px;width:15px;height:11px;border-radius:2px"></div><div class="a" style="left:435px;top:491px;width:7px;height:5px;background:repeating-linear-gradient(90deg,#8a8f98 0,#8a8f98 1px,transparent 1px,transparent 2px)"></div><div class="sbtn" style="left:495px;top:502px;width:15px;height:11px;border-radius:2px"></div><div class="a" style="left:499px;top:505px;width:7px;height:5px;background:repeating-linear-gradient(90deg,#8a8f98 0,#8a8f98 1px,transparent 1px,transparent 2px)"></div><svg class="a" style="left:808px;top:489px" width="20" height="20" viewBox="0 0 20 20"><path d="M2 18.5L8.500 12.500" stroke="#e0a030" stroke-width="3.2" stroke-linecap="round"/><circle cx="12.7" cy="7.8" r="5.5" fill="#e8f2fc" stroke="#8eaad6" stroke-width="1.3"/><path d="M9.5 7.8h6.4M12.7 4.6v6.4" stroke="#1440a8" stroke-width="2"/></svg><svg class="a" style="left:834px;top:489px" width="20" height="20" viewBox="0 0 20 20"><path d="M2 18.5L8.500 12.500" stroke="#e0a030" stroke-width="3.2" stroke-linecap="round"/><circle cx="12.7" cy="7.8" r="5.5" fill="#e8f2fc" stroke="#8eaad6" stroke-width="1.3"/><path d="M9.5 7.8h6.4" stroke="#1440a8" stroke-width="2"/></svg><svg class="a" style="left:860px;top:489px" width="20" height="20" viewBox="0 0 20 20"><path d="M4 1h10l4 4v14H4z" fill="#d8e4f6" stroke="#88a4d0"/><circle cx="10" cy="9" r="4.5" fill="#e6f0fb" stroke="#7a98cc" stroke-width="1.3"/><path d="M2 18l5-5.5" stroke="#d8a040" stroke-width="2.4" stroke-linecap="round"/></svg><svg class="a" style="left:889px;top:489px" width="18" height="20" viewBox="0 0 18 20"><path d="M1 2h11l4 4v13H1z" fill="#dfe6ea" stroke="#c2ccd4"/><path d="M4 11l3.5 3.5L13 8" stroke="#6cc04a" stroke-width="2.4" fill="none"/></svg><div id="bp" class="a"></div><div id="sb" class="a"></div><div class="a" style="left:199px;top:518px;width:764px;height:2px;background:#f6f6f8"></div><svg class="a" style="left:0;top:520px" width="330" height="60" viewBox="0 520 330 60"><defs><linearGradient id="bl" x1="0" y1="0" x2="0" y2="1"><stop offset="0" stop-color="#a2cef6"/><stop offset=".48" stop-color="#74b2f0"/><stop offset=".56" stop-color="#68aaee"/><stop offset="1" stop-color="#acd4f8"/></linearGradient><radialGradient id="rd" cx=".5" cy=".72" r=".75"><stop offset="0" stop-color="#ff9478"/><stop offset=".45" stop-color="#f65438"/><stop offset="1" stop-color="#e62c1a"/></radialGradient></defs><path d="M20.5 539.5L35.5 549L20.5 558.5z" fill="url(#bl)" stroke="#62a2e6" stroke-width="1"/><circle cx="63.7" cy="548.5" r="10.8" fill="url(#rd)" stroke="#f49a88" stroke-width="1"/><rect x="92.5" y="539.5" width="6" height="19" fill="url(#bl)" stroke="#62a2e6" stroke-width="1"/><rect x="101.5" y="539.5" width="6" height="19" fill="url(#bl)" stroke="#62a2e6" stroke-width="1"/><rect x="128.5" y="540.5" width="17" height="18" fill="url(#bl)" stroke="#62a2e6" stroke-width="1"/><rect x="173.5" y="539.5" width="5" height="19" fill="url(#bl)" stroke="#62a2e6" stroke-width="1"/><path d="M190.5 539.5L180 549L190.5 558.5z" fill="url(#bl)" stroke="#62a2e6" stroke-width="1"/><path d="M217.5 539.5L207.5 549L217.5 558.5zM228.5 539.5L218.5 549L228.5 558.5z" fill="url(#bl)" stroke="#62a2e6" stroke-width="1"/><path d="M244.5 539.5L254.5 549L244.5 558.5zM255.5 539.5L265.5 549L255.5 558.5z" fill="url(#bl)" stroke="#62a2e6" stroke-width="1"/><path d="M283.5 539.5L294 549L283.5 558.5z" fill="url(#bl)" stroke="#62a2e6" stroke-width="1"/><rect x="295.5" y="539.5" width="5" height="19" fill="url(#bl)" stroke="#62a2e6" stroke-width="1"/></svg><div class="a" style="left:342px;top:528px;width:263px;height:45px;background:linear-gradient(180deg,#dedcd8,#dad8d2);border:1px solid #fbfbfb;box-shadow:0 0 0 1px #c4c4c8"></div><div class="inf" style="left:362px;top:537.6px;letter-spacing:-0.15px">Start:</div><div class="inf" style="left:362px;top:553px;letter-spacing:-0.15px">End:</div><div class="inf" style="left:403px;top:537.6px;letter-spacing:-0.36px">0:00:27.330</div><div class="inf" style="left:403px;top:553px;letter-spacing:-0.36px">0:00:35.638</div><div class="inf" style="left:490px;top:537.6px;letter-spacing:-0.15px">Sel:</div><div class="inf" style="left:490px;top:553px;letter-spacing:-0.15px">File:</div><div class="inf" style="left:523px;top:537.6px;letter-spacing:-0.36px">0:00:08.308</div><div class="inf" style="left:523px;top:553px;letter-spacing:-0.36px">0:01:12.150</div><div class="inf" style="left:644px;top:532.5px;font-weight:bold;font-size:11.5px;color:#3a78c4">Current Time:</div><div class="inf" style="left:756px;top:532.5px;font-weight:bold;font-size:11.5px;color:#3a78c4">0:00:27.330</div><div class="a" style="left:644px;top:554px;width:312px;height:14px;background:#000"></div><div class="a" style="left:507px;top:583px;width:1px;height:15px;background:#c8c5b4;box-shadow:1px 0 0 #fff"></div><svg class="a" style="left:950px;top:586px" width="13" height="13"><g fill="#b8b5a2"><rect x="9" y="1" width="2" height="2"/><rect x="5" y="5" width="2" height="2"/><rect x="9" y="5" width="2" height="2"/><rect x="1" y="9" width="2" height="2"/><rect x="5" y="9" width="2" height="2"/><rect x="9" y="9" width="2" height="2"/></g></svg></body></html>
